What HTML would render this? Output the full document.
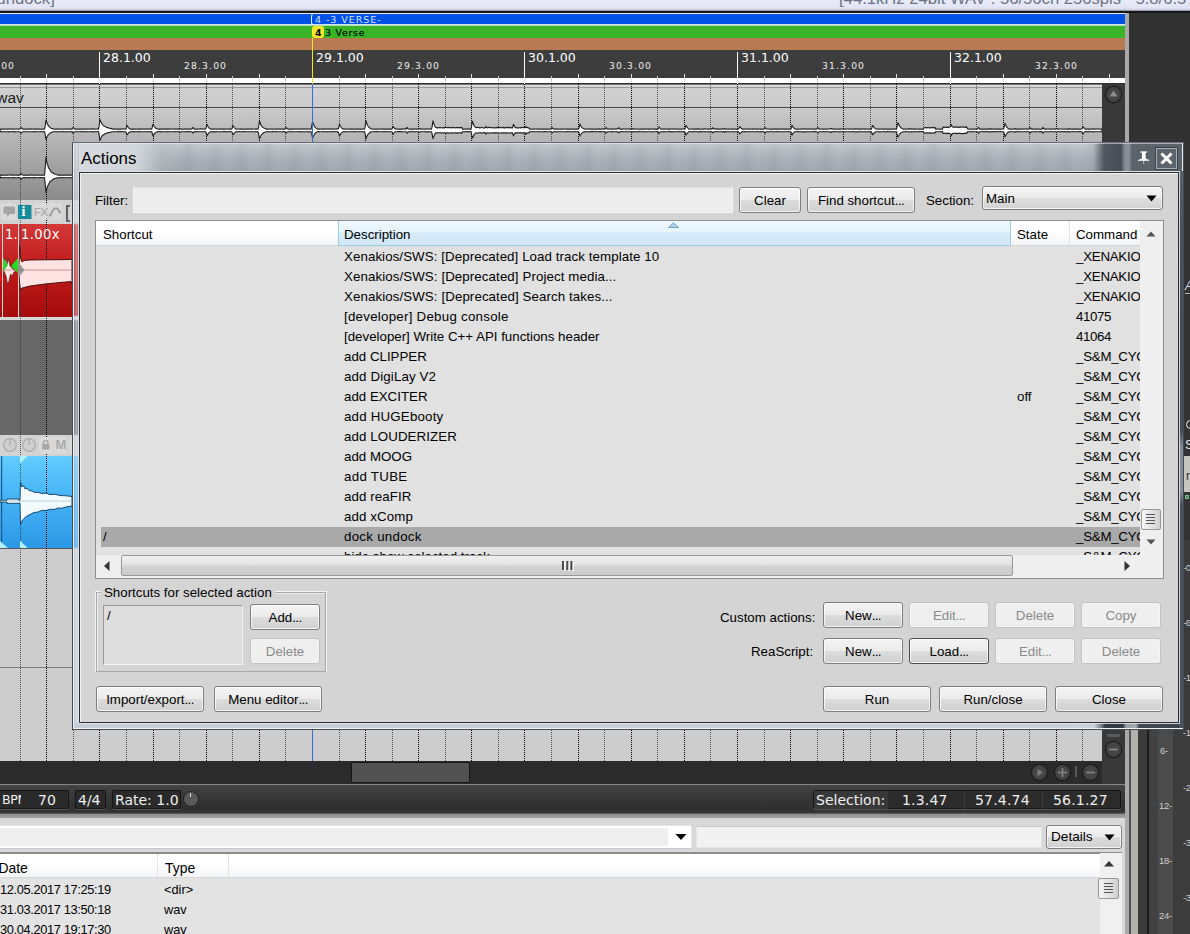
<!DOCTYPE html>
<html><head><meta charset="utf-8"><title>Actions</title>
<style>
*{box-sizing:border-box;margin:0;padding:0}
html,body{width:1190px;height:934px;overflow:hidden;background:#333}
body{position:relative;font-family:"Liberation Sans",sans-serif;font-size:13.3px;color:#000;line-height:1}
.abs{position:absolute}
.dv{font-family:"DejaVu Sans","Liberation Sans",sans-serif}
/* ---- top ---- */
#titlestrip{left:0;top:0;width:1190px;height:10px;background:linear-gradient(#e9ebf8,#e2e4f4 80%,#c9cde0);overflow:hidden}
#titlestrip span{position:absolute;font-size:16.65px;color:#6c7486;white-space:nowrap}
#arr{left:0;top:10px;width:1125px;height:804px;background:#ccc;overflow:hidden}

.cb{position:absolute;width:15px;height:15px;border-radius:50%;background:radial-gradient(#4c4c4c,#424242 60%,#383838);box-shadow:0 0 0 1.2px #1c1c1c}
.cb svg{position:absolute;left:-1px;top:-1px}
.tbox{position:absolute;height:19.5px;background:#2a2a2a;border:1px solid #161616;border-radius:2px;box-shadow:0 1px 0 #555}
.tt{font-size:14px;color:#f0f0f0;white-space:nowrap;line-height:16px}
.me{font-size:12.8px;color:#000;white-space:nowrap;line-height:14px}
.ml{font-size:9.5px;color:#d0d0d0;font-family:"Liberation Sans",sans-serif;white-space:nowrap;letter-spacing:-.3px}
/* ---- dialog ---- */
#win{background:#eef1f4;border:1px solid #474b50;border-top-color:#6a7078}
#wtitle{background:
linear-gradient(90deg,rgba(0,0,0,0) 1019px,rgba(70,76,84,.9) 1030px,rgba(66,72,80,.95) 1047px,rgba(130,138,146,.9) 1051px,rgba(130,138,146,.9) 1055px,rgba(84,92,100,.92) 1058px,rgba(84,92,100,.92) 100%),
linear-gradient(90deg,rgba(214,218,222,1) 0,rgba(212,216,220,.95) 62px,rgba(200,205,210,.5) 80px,rgba(190,196,202,0) 100px),
repeating-linear-gradient(90deg,rgba(0,0,0,0) 0,rgba(0,0,0,.03) 8px,rgba(255,255,255,.03) 18px,rgba(0,0,0,0) 26.6px),
linear-gradient(180deg,#c2c8ce,#adb4bb 45%,#9ea6ae)}
.d{letter-spacing:-.6px}
.lbl{font-size:13.3px;line-height:15px;white-space:nowrap;color:#000}
.row.sel{background:linear-gradient(90deg,transparent 5px,#a9a9a9 5px)}
.row.sel span:first-child{}

.btn{position:absolute;height:26px;border:1px solid #7e7e7e;border-radius:3px;background:linear-gradient(#f4f4f4,#ebebeb 48%,#dcdcdc 52%,#d0d0d0);box-shadow:inset 0 0 0 1px rgba(255,255,255,.75);text-align:center;line-height:25px;font-size:13.3px;color:#000;white-space:nowrap}
.btn.dis{color:#8a8a8a;border-color:#c2c2c2;background:#efefef;box-shadow:inset 0 0 0 1px rgba(255,255,255,.35)}
.row{position:absolute;left:0;height:20px;width:1044px;line-height:20px;white-space:nowrap}
.row span{position:absolute;top:0}
</style></head><body>

<!-- title strip -->
<div id="titlestrip" class="abs">
<span style="left:-3.500px;top:-9.500px">undock]</span>
<span style="left:839px;top:-9px">[44.1kHz 24bit WAV : 56/56ch 256spls ~5.8/6.5%]</span>
</div>
<div class="abs" style="left:0;top:10px;width:1190px;height:1px;background:#9a9ca8"></div>
<div class="abs" style="left:0;top:11px;width:1190px;height:2px;background:#161616"></div>

<!-- arrange -->
<div class="abs" style="left:0;top:13px;width:1125px;height:1px;background:#e8eef8"></div>
<div class="abs" style="left:0;top:14px;width:1125px;height:10px;background:#0052e6"></div>
<div class="abs" style="left:0;top:24px;width:1125px;height:2px;background:linear-gradient(#dfe9ff,#9fd8a0)"></div>
<div class="abs" style="left:0;top:26px;width:1125px;height:12px;background:#38b426"></div>
<div class="abs" style="left:0;top:38px;width:1125px;height:12px;background:#b87a52"></div>
<div class="abs" style="left:0;top:50px;width:1125px;height:28px;background:#3d3d3d"></div>
<div class="abs" style="left:0;top:78px;width:1125px;height:5px;background:#fff"></div>
<div class="abs" style="left:0;top:83px;width:1125px;height:2px;background:linear-gradient(#2e2e2e 50%,#777 50%)"></div>
<div class="abs" style="left:20px;top:76px;width:1px;height:6px;background:#ccc"></div><div class="abs" style="left:46px;top:74px;width:1px;height:8px;background:#ddd"></div><div class="abs" style="left:73px;top:76px;width:1px;height:6px;background:#ccc"></div><div class="abs" style="left:99px;top:52px;width:1px;height:32px;background:#fff"></div><div class="abs" style="left:126px;top:76px;width:1px;height:6px;background:#ccc"></div><div class="abs" style="left:153px;top:74px;width:1px;height:8px;background:#ddd"></div><div class="abs" style="left:179px;top:76px;width:1px;height:6px;background:#ccc"></div><div class="abs" style="left:206px;top:74px;width:1px;height:8px;background:#ddd"></div><div class="abs" style="left:232px;top:76px;width:1px;height:6px;background:#ccc"></div><div class="abs" style="left:259px;top:74px;width:1px;height:8px;background:#ddd"></div><div class="abs" style="left:285px;top:76px;width:1px;height:6px;background:#ccc"></div><div class="abs" style="left:312px;top:52px;width:1px;height:32px;background:#fff"></div><div class="abs" style="left:339px;top:76px;width:1px;height:6px;background:#ccc"></div><div class="abs" style="left:365px;top:74px;width:1px;height:8px;background:#ddd"></div><div class="abs" style="left:392px;top:76px;width:1px;height:6px;background:#ccc"></div><div class="abs" style="left:418px;top:74px;width:1px;height:8px;background:#ddd"></div><div class="abs" style="left:445px;top:76px;width:1px;height:6px;background:#ccc"></div><div class="abs" style="left:471px;top:74px;width:1px;height:8px;background:#ddd"></div><div class="abs" style="left:498px;top:76px;width:1px;height:6px;background:#ccc"></div><div class="abs" style="left:524px;top:52px;width:1px;height:32px;background:#fff"></div><div class="abs" style="left:551px;top:76px;width:1px;height:6px;background:#ccc"></div><div class="abs" style="left:578px;top:74px;width:1px;height:8px;background:#ddd"></div><div class="abs" style="left:604px;top:76px;width:1px;height:6px;background:#ccc"></div><div class="abs" style="left:631px;top:74px;width:1px;height:8px;background:#ddd"></div><div class="abs" style="left:657px;top:76px;width:1px;height:6px;background:#ccc"></div><div class="abs" style="left:684px;top:74px;width:1px;height:8px;background:#ddd"></div><div class="abs" style="left:710px;top:76px;width:1px;height:6px;background:#ccc"></div><div class="abs" style="left:737px;top:52px;width:1px;height:32px;background:#fff"></div><div class="abs" style="left:764px;top:76px;width:1px;height:6px;background:#ccc"></div><div class="abs" style="left:790px;top:74px;width:1px;height:8px;background:#ddd"></div><div class="abs" style="left:817px;top:76px;width:1px;height:6px;background:#ccc"></div><div class="abs" style="left:843px;top:74px;width:1px;height:8px;background:#ddd"></div><div class="abs" style="left:870px;top:76px;width:1px;height:6px;background:#ccc"></div><div class="abs" style="left:896px;top:74px;width:1px;height:8px;background:#ddd"></div><div class="abs" style="left:923px;top:76px;width:1px;height:6px;background:#ccc"></div><div class="abs" style="left:950px;top:52px;width:1px;height:32px;background:#fff"></div><div class="abs" style="left:976px;top:76px;width:1px;height:6px;background:#ccc"></div><div class="abs" style="left:1003px;top:74px;width:1px;height:8px;background:#ddd"></div><div class="abs" style="left:1029px;top:76px;width:1px;height:6px;background:#ccc"></div><div class="abs" style="left:1056px;top:74px;width:1px;height:8px;background:#ddd"></div><div class="abs" style="left:1082px;top:76px;width:1px;height:6px;background:#ccc"></div><div class="abs" style="left:1109px;top:74px;width:1px;height:8px;background:#ddd"></div>
<!-- ruler labels -->
<div class="abs dv" style="left:0;top:50px;width:1125px;height:28px;color:#fff;overflow:hidden">
<span class="abs" style="left:-28px;top:10.5px;font-size:9.2px;letter-spacing:1.15px;color:#eee">27.3.00</span>
<span class="abs" style="left:103px;top:2px;font-size:12.5px">28.1.00</span>
<span class="abs" style="left:184px;top:10.5px;font-size:9.2px;letter-spacing:1.15px;color:#eee">28.3.00</span>
<span class="abs" style="left:316px;top:2px;font-size:12.5px">29.1.00</span>
<span class="abs" style="left:397px;top:10.5px;font-size:9.2px;letter-spacing:1.15px;color:#eee">29.3.00</span>
<span class="abs" style="left:528px;top:2px;font-size:12.5px">30.1.00</span>
<span class="abs" style="left:609px;top:10.5px;font-size:9.2px;letter-spacing:1.15px;color:#eee">30.3.00</span>
<span class="abs" style="left:741px;top:2px;font-size:12.5px">31.1.00</span>
<span class="abs" style="left:822px;top:10.5px;font-size:9.2px;letter-spacing:1.15px;color:#eee">31.3.00</span>
<span class="abs" style="left:954px;top:2px;font-size:12.5px">32.1.00</span>
<span class="abs" style="left:1035px;top:10.5px;font-size:9.2px;letter-spacing:1.15px;color:#eee">32.3.00</span>
</div>

<!-- track lanes -->
<div class="abs" style="left:0;top:85px;width:1102px;height:676px;background:#cdcdcd"></div>
<!-- item 1 (grey) -->
<div class="abs" style="left:0;top:85px;width:1102px;height:116px;background:linear-gradient(#d2d2d2,#cacaca 20%,#8a8a8a)"></div>
<div class="abs" style="left:0;top:85px;width:1102px;height:2px;background:#d8d8d8"></div><div class="abs" style="left:0;top:87px;width:1102px;height:1px;background:#9a9a9a"></div>
<div class="abs" style="left:0;top:107px;width:1102px;height:1px;background:#4a4a4a"></div>
<span class="abs" style="left:-8px;top:90px;font-size:15.5px;color:#222">.wav</span>
<!-- track 2 header strip -->
<div class="abs" style="left:0;top:200px;width:1102px;height:24px;background:#d2d2d2"></div>
<!-- item 2 (red) -->
<div class="abs" style="left:0;top:224px;width:1102px;height:93px;background:linear-gradient(#d43838,#c01c1c 45%,#a60c0c)"></div>
<div class="abs" style="left:0;top:317px;width:1102px;height:3px;background:#d8d8d8"></div>
<div class="abs" style="left:0;top:320px;width:1102px;height:115px;background:#676767"></div>
<div class="abs" style="left:0;top:435px;width:1102px;height:21px;background:#d2d2d2"></div>
<!-- item 3 (blue) -->
<div class="abs" style="left:0;top:456px;width:1102px;height:93px;background:linear-gradient(#62ccff,#42b0f4 50%,#2c98e6)"></div>
<div class="abs" style="left:0;top:548px;width:1102px;height:1px;background:#555"></div>
<div class="abs" style="left:0;top:667px;width:1102px;height:1px;background:#7a7a7a"></div>

<svg class="abs" style="left:0;top:0" width="1125" height="934" viewBox="0 0 1125 934" shape-rendering="crispEdges">
<line x1="20.5" y1="84" x2="20.5" y2="761" stroke="#333" stroke-opacity="0.8" stroke-dasharray="1 1"/><line x1="46.5" y1="84" x2="46.5" y2="761" stroke="#000" stroke-opacity="1" stroke-dasharray="1 1"/><line x1="73.5" y1="84" x2="73.5" y2="761" stroke="#333" stroke-opacity="0.8" stroke-dasharray="1 1"/><line x1="99.5" y1="84" x2="99.5" y2="761" stroke="#000" stroke-opacity="1" stroke-dasharray="1 1"/><line x1="126.5" y1="84" x2="126.5" y2="761" stroke="#333" stroke-opacity="0.8" stroke-dasharray="1 1"/><line x1="153.5" y1="84" x2="153.5" y2="761" stroke="#000" stroke-opacity="1" stroke-dasharray="1 1"/><line x1="179.5" y1="84" x2="179.5" y2="761" stroke="#333" stroke-opacity="0.8" stroke-dasharray="1 1"/><line x1="206.5" y1="84" x2="206.5" y2="761" stroke="#000" stroke-opacity="1" stroke-dasharray="1 1"/><line x1="232.5" y1="84" x2="232.5" y2="761" stroke="#333" stroke-opacity="0.8" stroke-dasharray="1 1"/><line x1="259.5" y1="84" x2="259.5" y2="761" stroke="#000" stroke-opacity="1" stroke-dasharray="1 1"/><line x1="285.5" y1="84" x2="285.5" y2="761" stroke="#333" stroke-opacity="0.8" stroke-dasharray="1 1"/><line x1="312.5" y1="84" x2="312.5" y2="761" stroke="#000" stroke-opacity="1" stroke-dasharray="1 1"/><line x1="339.5" y1="84" x2="339.5" y2="761" stroke="#333" stroke-opacity="0.8" stroke-dasharray="1 1"/><line x1="365.5" y1="84" x2="365.5" y2="761" stroke="#000" stroke-opacity="1" stroke-dasharray="1 1"/><line x1="392.5" y1="84" x2="392.5" y2="761" stroke="#333" stroke-opacity="0.8" stroke-dasharray="1 1"/><line x1="418.5" y1="84" x2="418.5" y2="761" stroke="#000" stroke-opacity="1" stroke-dasharray="1 1"/><line x1="445.5" y1="84" x2="445.5" y2="761" stroke="#333" stroke-opacity="0.8" stroke-dasharray="1 1"/><line x1="471.5" y1="84" x2="471.5" y2="761" stroke="#000" stroke-opacity="1" stroke-dasharray="1 1"/><line x1="498.5" y1="84" x2="498.5" y2="761" stroke="#333" stroke-opacity="0.8" stroke-dasharray="1 1"/><line x1="524.5" y1="84" x2="524.5" y2="761" stroke="#000" stroke-opacity="1" stroke-dasharray="1 1"/><line x1="551.5" y1="84" x2="551.5" y2="761" stroke="#333" stroke-opacity="0.8" stroke-dasharray="1 1"/><line x1="578.5" y1="84" x2="578.5" y2="761" stroke="#000" stroke-opacity="1" stroke-dasharray="1 1"/><line x1="604.5" y1="84" x2="604.5" y2="761" stroke="#333" stroke-opacity="0.8" stroke-dasharray="1 1"/><line x1="631.5" y1="84" x2="631.5" y2="761" stroke="#000" stroke-opacity="1" stroke-dasharray="1 1"/><line x1="657.5" y1="84" x2="657.5" y2="761" stroke="#333" stroke-opacity="0.8" stroke-dasharray="1 1"/><line x1="684.5" y1="84" x2="684.5" y2="761" stroke="#000" stroke-opacity="1" stroke-dasharray="1 1"/><line x1="710.5" y1="84" x2="710.5" y2="761" stroke="#333" stroke-opacity="0.8" stroke-dasharray="1 1"/><line x1="737.5" y1="84" x2="737.5" y2="761" stroke="#000" stroke-opacity="1" stroke-dasharray="1 1"/><line x1="764.5" y1="84" x2="764.5" y2="761" stroke="#333" stroke-opacity="0.8" stroke-dasharray="1 1"/><line x1="790.5" y1="84" x2="790.5" y2="761" stroke="#000" stroke-opacity="1" stroke-dasharray="1 1"/><line x1="817.5" y1="84" x2="817.5" y2="761" stroke="#333" stroke-opacity="0.8" stroke-dasharray="1 1"/><line x1="843.5" y1="84" x2="843.5" y2="761" stroke="#000" stroke-opacity="1" stroke-dasharray="1 1"/><line x1="870.5" y1="84" x2="870.5" y2="761" stroke="#333" stroke-opacity="0.8" stroke-dasharray="1 1"/><line x1="896.5" y1="84" x2="896.5" y2="761" stroke="#000" stroke-opacity="1" stroke-dasharray="1 1"/><line x1="923.5" y1="84" x2="923.5" y2="761" stroke="#333" stroke-opacity="0.8" stroke-dasharray="1 1"/><line x1="950.5" y1="84" x2="950.5" y2="761" stroke="#000" stroke-opacity="1" stroke-dasharray="1 1"/><line x1="976.5" y1="84" x2="976.5" y2="761" stroke="#333" stroke-opacity="0.8" stroke-dasharray="1 1"/><line x1="1003.5" y1="84" x2="1003.5" y2="761" stroke="#000" stroke-opacity="1" stroke-dasharray="1 1"/><line x1="1029.5" y1="84" x2="1029.5" y2="761" stroke="#333" stroke-opacity="0.8" stroke-dasharray="1 1"/><line x1="1056.5" y1="84" x2="1056.5" y2="761" stroke="#000" stroke-opacity="1" stroke-dasharray="1 1"/><line x1="1082.5" y1="84" x2="1082.5" y2="761" stroke="#333" stroke-opacity="0.8" stroke-dasharray="1 1"/>
</svg>
<svg class="abs" style="left:0;top:0" width="1125" height="934" viewBox="0 0 1125 934">
<path d="M0.0 129.1L0.5 129.0L1.0 129.1L1.5 129.1L2.0 129.0L2.5 129.1L3.0 129.0L3.5 129.1L4.0 129.2L4.5 129.0L5.0 128.9L5.5 129.0L6.0 129.0L6.5 129.1L7.0 129.1L7.5 129.1L8.0 129.0L8.5 128.9L9.0 129.1L9.5 128.9L10.0 129.0L10.5 129.1L11.0 128.9L11.5 129.0L12.0 129.1L12.5 129.2L13.0 129.0L13.5 128.9L14.0 129.2L14.5 129.2L15.0 129.1L15.5 129.0L16.0 129.0L16.5 129.0L17.0 129.0L17.5 129.1L18.0 129.2L18.5 129.0L19.0 129.1L19.5 129.0L20.0 129.0L20.5 128.4L21.0 127.5L21.5 128.0L22.0 128.5L22.5 128.9L23.0 129.1L23.5 129.2L24.0 129.1L24.5 129.2L25.0 129.1L25.5 129.1L26.0 129.0L26.5 129.0L27.0 129.2L27.5 129.1L28.0 129.2L28.5 129.0L29.0 129.2L29.5 129.1L30.0 129.1L30.5 129.2L31.0 128.9L31.5 128.9L32.0 128.9L32.5 129.1L33.0 129.2L33.5 129.1L34.0 128.9L34.5 128.9L35.0 129.2L35.5 129.1L36.0 129.0L36.5 129.1L37.0 129.0L37.5 129.1L38.0 129.1L38.5 128.9L39.0 129.0L39.5 129.1L40.0 129.1L40.5 129.2L41.0 129.2L41.5 129.0L42.0 129.1L42.5 129.0L43.0 129.2L43.5 129.0L44.0 129.2L44.5 129.0L45.0 127.0L45.5 123.5L46.0 119.8L46.5 121.7L47.0 123.1L47.5 123.9L48.0 124.9L48.5 126.0L49.0 126.3L49.5 126.9L50.0 127.4L50.5 127.7L51.0 128.2L51.5 128.5L52.0 128.5L52.5 128.7L53.0 129.0L53.5 129.0L54.0 128.9L54.5 129.1L55.0 129.2L55.5 129.0L56.0 129.1L56.5 129.1L57.0 128.9L57.5 129.1L58.0 129.0L58.5 129.0L59.0 129.1L59.5 129.1L60.0 129.2L60.5 129.1L61.0 128.9L61.5 129.0L62.0 129.1L62.5 129.2L63.0 129.2L63.5 129.0L64.0 129.0L64.5 128.9L65.0 129.0L65.5 129.1L66.0 129.1L66.5 129.0L67.0 129.0L67.5 129.2L68.0 128.9L68.5 129.0L69.0 129.1L69.5 129.0L70.0 129.0L70.5 129.1L71.0 129.1L71.5 129.1L72.0 129.1L72.5 128.3L73.0 127.4L73.5 128.0L74.0 128.4L74.5 128.8L75.0 129.1L75.5 129.1L76.0 129.1L76.5 129.1L77.0 129.1L77.5 129.2L78.0 129.0L78.5 129.1L79.0 129.1L79.5 129.0L80.0 129.1L80.5 129.2L81.0 129.0L81.5 129.1L82.0 129.0L82.5 129.2L83.0 129.0L83.5 129.1L84.0 128.9L84.5 129.2L85.0 129.0L85.5 129.1L86.0 128.9L86.5 129.1L87.0 129.0L87.5 129.1L88.0 129.0L88.5 129.0L89.0 129.1L89.5 129.1L90.0 129.0L90.5 128.9L91.0 129.0L91.5 129.1L92.0 129.0L92.5 128.9L93.0 128.9L93.5 129.0L94.0 128.9L94.5 129.0L95.0 129.2L95.5 129.2L96.0 129.0L96.5 129.0L97.0 129.0L97.5 128.9L98.0 129.1L98.5 129.2L99.0 126.8L99.5 123.0L100.0 119.3L100.5 120.9L101.0 122.2L101.5 122.7L102.0 123.8L102.5 124.6L103.0 125.1L103.5 125.6L104.0 126.0L104.5 126.0L105.0 126.6L105.5 126.9L106.0 126.9L106.5 127.4L107.0 127.6L107.5 127.6L108.0 127.8L108.5 127.9L109.0 128.1L109.5 128.3L110.0 128.4L110.5 128.4L111.0 128.6L111.5 128.6L112.0 128.9L112.5 128.9L113.0 129.0L113.5 129.1L114.0 129.1L114.5 129.0L115.0 129.1L115.5 128.9L116.0 128.9L116.5 129.1L117.0 129.0L117.5 129.2L118.0 129.2L118.5 129.0L119.0 129.1L119.5 129.1L120.0 129.0L120.5 129.2L121.0 129.0L121.5 129.0L122.0 129.2L122.5 129.0L123.0 128.9L123.5 129.0L124.0 129.0L124.5 129.1L125.0 129.1L125.5 129.1L126.0 128.8L126.5 127.1L127.0 125.3L127.5 126.4L128.0 127.0L128.5 127.7L129.0 128.3L129.5 128.6L130.0 129.0L130.5 129.0L131.0 129.2L131.5 129.1L132.0 129.1L132.5 129.1L133.0 129.0L133.5 129.1L134.0 129.1L134.5 128.9L135.0 129.1L135.5 129.1L136.0 129.0L136.5 129.0L137.0 129.1L137.5 129.2L138.0 129.1L138.5 129.1L139.0 128.9L139.5 129.2L140.0 129.1L140.5 129.1L141.0 129.1L141.5 129.2L142.0 129.0L142.5 129.0L143.0 128.9L143.5 129.0L144.0 129.2L144.5 128.9L145.0 129.0L145.5 129.0L146.0 129.2L146.5 128.9L147.0 129.1L147.5 129.0L148.0 129.1L148.5 128.9L149.0 129.1L149.5 129.0L150.0 128.9L150.5 129.0L151.0 128.9L151.5 129.1L152.0 128.3L152.5 126.1L153.0 124.3L153.5 125.4L154.0 126.3L154.5 126.9L155.0 127.4L155.5 128.0L156.0 128.4L156.5 128.6L157.0 128.8L157.5 129.0L158.0 129.0L158.5 129.1L159.0 129.1L159.5 129.1L160.0 129.1L160.5 129.0L161.0 129.2L161.5 129.0L162.0 128.9L162.5 129.1L163.0 129.0L163.5 129.2L164.0 129.0L164.5 129.1L165.0 129.0L165.5 128.9L166.0 128.9L166.5 129.2L167.0 128.9L167.5 129.2L168.0 128.9L168.5 129.0L169.0 129.1L169.5 129.1L170.0 129.1L170.5 129.0L171.0 128.9L171.5 129.0L172.0 129.0L172.5 129.0L173.0 129.1L173.5 128.9L174.0 129.1L174.5 129.0L175.0 129.1L175.5 128.9L176.0 129.0L176.5 128.9L177.0 129.1L177.5 129.1L178.0 129.1L178.5 129.1L179.0 129.2L179.5 129.1L180.0 128.4L180.5 128.7L181.0 129.1L181.5 129.1L182.0 129.2L182.5 129.1L183.0 129.2L183.5 129.2L184.0 129.1L184.5 129.0L185.0 128.9L185.5 129.0L186.0 129.2L186.5 129.0L187.0 129.1L187.5 129.0L188.0 129.1L188.5 128.9L189.0 129.2L189.5 129.0L190.0 128.9L190.5 129.2L191.0 129.1L191.5 129.1L192.0 128.9L192.5 128.4L193.0 127.2L193.5 128.0L194.0 128.7L194.5 129.1L195.0 129.0L195.5 129.2L196.0 129.2L196.5 129.0L197.0 129.1L197.5 129.1L198.0 129.0L198.5 129.0L199.0 129.0L199.5 129.1L200.0 129.0L200.5 128.9L201.0 128.9L201.5 128.9L202.0 129.0L202.5 129.1L203.0 129.0L203.5 129.0L204.0 129.0L204.5 129.1L205.0 129.1L205.5 129.0L206.0 128.4L206.5 126.2L207.0 124.2L207.5 125.4L208.0 126.4L208.5 127.3L209.0 127.8L209.5 128.4L210.0 128.7L210.5 129.0L211.0 129.0L211.5 129.2L212.0 129.0L212.5 129.1L213.0 129.0L213.5 129.1L214.0 128.9L214.5 129.0L215.0 129.0L215.5 129.0L216.0 129.1L216.5 129.1L217.0 129.0L217.5 129.0L218.0 129.0L218.5 129.2L219.0 129.1L219.5 128.9L220.0 129.2L220.5 128.9L221.0 129.1L221.5 129.0L222.0 129.0L222.5 129.2L223.0 129.0L223.5 129.1L224.0 129.0L224.5 129.1L225.0 129.1L225.5 129.2L226.0 129.0L226.5 129.0L227.0 129.0L227.5 129.0L228.0 129.1L228.5 129.1L229.0 129.1L229.5 129.2L230.0 129.1L230.5 129.0L231.0 129.1L231.5 129.1L232.0 128.7L232.5 127.0L233.0 125.4L233.5 126.4L234.0 127.2L234.5 127.9L235.0 128.2L235.5 128.7L236.0 129.0L236.5 129.2L237.0 129.1L237.5 129.0L238.0 129.0L238.5 129.0L239.0 129.0L239.5 129.2L240.0 129.0L240.5 129.1L241.0 129.1L241.5 129.0L242.0 129.1L242.5 128.9L243.0 129.2L243.5 129.1L244.0 129.2L244.5 129.1L245.0 128.9L245.5 129.1L246.0 129.0L246.5 129.2L247.0 129.1L247.5 129.1L248.0 129.1L248.5 129.1L249.0 129.0L249.5 129.1L250.0 128.9L250.5 128.9L251.0 129.0L251.5 128.9L252.0 129.2L252.5 129.1L253.0 129.0L253.5 129.0L254.0 129.0L254.5 129.0L255.0 129.0L255.5 129.1L256.0 129.0L256.5 129.1L257.0 128.9L257.5 129.2L258.0 129.1L258.5 127.3L259.0 124.5L259.5 121.2L260.0 122.3L260.5 124.1L261.0 124.9L261.5 125.7L262.0 126.5L262.5 127.0L263.0 127.4L263.5 127.7L264.0 128.0L264.5 128.3L265.0 128.5L265.5 128.8L266.0 129.0L266.5 129.1L267.0 129.1L267.5 129.0L268.0 129.1L268.5 129.0L269.0 129.0L269.5 128.9L270.0 129.1L270.5 129.0L271.0 128.9L271.5 129.1L272.0 129.2L272.5 129.1L273.0 129.1L273.5 129.0L274.0 129.0L274.5 129.0L275.0 129.1L275.5 129.1L276.0 129.0L276.5 129.1L277.0 128.9L277.5 129.2L278.0 129.1L278.5 129.0L279.0 128.9L279.5 129.1L280.0 129.0L280.5 129.1L281.0 129.1L281.5 128.9L282.0 129.0L282.5 129.1L283.0 129.0L283.5 129.1L284.0 129.1L284.5 129.2L285.0 129.0L285.5 128.5L286.0 127.3L286.5 127.9L287.0 128.5L287.5 128.8L288.0 129.1L288.5 129.0L289.0 129.2L289.5 129.1L290.0 129.2L290.5 129.1L291.0 129.1L291.5 129.1L292.0 129.0L292.5 129.1L293.0 129.1L293.5 129.1L294.0 128.9L294.5 129.0L295.0 129.2L295.5 129.0L296.0 129.0L296.5 129.0L297.0 129.1L297.5 129.0L298.0 128.9L298.5 129.0L299.0 129.1L299.5 129.1L300.0 129.0L300.5 129.0L301.0 128.9L301.5 129.0L302.0 128.9L302.5 129.1L303.0 129.1L303.5 129.0L304.0 128.9L304.5 129.0L305.0 129.1L305.5 128.9L306.0 129.1L306.5 129.1L307.0 129.1L307.5 129.0L308.0 129.0L308.5 128.9L309.0 129.0L309.5 129.0L310.0 129.1L310.5 129.1L311.0 129.0L311.5 128.1L312.0 124.7L312.5 122.1L313.0 122.9L313.5 124.0L314.0 125.4L314.5 126.4L315.0 127.1L315.5 127.7L316.0 128.2L316.5 128.6L317.0 128.9L317.5 129.0L318.0 129.1L318.5 129.1L319.0 128.9L319.5 129.0L320.0 129.1L320.5 129.0L321.0 129.0L321.5 129.2L322.0 129.1L322.5 129.0L323.0 129.1L323.5 129.0L324.0 129.1L324.5 129.1L325.0 128.9L325.5 128.9L326.0 129.1L326.5 129.1L327.0 128.9L327.5 129.0L328.0 129.0L328.5 128.9L329.0 129.1L329.5 129.1L330.0 129.1L330.5 129.0L331.0 128.9L331.5 129.0L332.0 129.1L332.5 129.1L333.0 129.2L333.5 129.1L334.0 129.0L334.5 129.0L335.0 129.1L335.5 129.0L336.0 129.0L336.5 129.1L337.0 128.9L337.5 128.9L338.0 129.0L338.5 128.4L339.0 126.2L339.5 124.0L340.0 125.4L340.5 126.5L341.0 127.1L341.5 127.8L342.0 128.3L342.5 128.7L343.0 128.9L343.5 128.9L344.0 129.1L344.5 128.9L345.0 129.2L345.5 129.0L346.0 129.0L346.5 129.0L347.0 129.2L347.5 129.0L348.0 128.9L348.5 129.1L349.0 129.2L349.5 129.2L350.0 129.1L350.5 129.0L351.0 129.1L351.5 129.0L352.0 129.1L352.5 129.2L353.0 129.1L353.5 129.2L354.0 129.0L354.5 129.0L355.0 129.1L355.5 129.2L356.0 129.1L356.5 129.1L357.0 129.1L357.5 129.2L358.0 129.1L358.5 129.1L359.0 129.0L359.5 129.2L360.0 129.1L360.5 129.1L361.0 129.1L361.5 129.1L362.0 129.2L362.5 129.0L363.0 129.0L363.5 128.9L364.0 129.1L364.5 129.1L365.0 127.4L365.5 124.3L366.0 120.6L366.5 122.5L367.0 124.0L367.5 125.2L368.0 126.0L368.5 126.7L369.0 127.4L369.5 127.8L370.0 128.0L370.5 128.5L371.0 128.8L371.5 129.0L372.0 129.0L372.5 129.0L373.0 129.0L373.5 129.2L374.0 129.1L374.5 129.2L375.0 129.2L375.5 129.0L376.0 129.1L376.5 129.2L377.0 129.1L377.5 129.1L378.0 129.2L378.5 129.1L379.0 129.0L379.5 129.0L380.0 129.1L380.5 129.2L381.0 129.0L381.5 129.0L382.0 129.0L382.5 128.9L383.0 129.2L383.5 129.1L384.0 129.1L384.5 129.1L385.0 129.2L385.5 129.0L386.0 129.1L386.5 129.2L387.0 129.2L387.5 129.0L388.0 129.1L388.5 129.1L389.0 129.1L389.5 129.0L390.0 129.1L390.5 129.1L391.0 129.0L391.5 129.1L392.0 129.0L392.5 127.8L393.0 126.2L393.5 127.1L394.0 127.7L394.5 128.3L395.0 128.7L395.5 128.9L396.0 129.0L396.5 129.1L397.0 129.2L397.5 129.0L398.0 129.0L398.5 129.0L399.0 129.1L399.5 129.1L400.0 129.1L400.5 129.0L401.0 129.1L401.5 129.0L402.0 129.1L402.5 129.1L403.0 129.0L403.5 129.0L404.0 128.9L404.5 128.9L405.0 129.0L405.5 129.1L406.0 129.0L406.5 128.5L407.0 127.3L407.5 128.2L408.0 128.6L408.5 128.9L409.0 129.0L409.5 129.2L410.0 129.1L410.5 129.2L411.0 129.0L411.5 129.2L412.0 129.0L412.5 129.1L413.0 129.0L413.5 129.1L414.0 129.0L414.5 129.1L415.0 129.0L415.5 129.0L416.0 128.9L416.5 129.1L417.0 129.0L417.5 129.1L418.0 129.1L418.5 129.0L419.0 128.9L419.5 128.6L420.0 128.7L420.5 129.2L421.0 129.1L421.5 129.1L422.0 129.1L422.5 129.0L423.0 129.0L423.5 129.1L424.0 129.0L424.5 129.2L425.0 129.0L425.5 129.0L426.0 129.2L426.5 128.9L427.0 129.0L427.5 129.0L428.0 128.9L428.5 129.1L429.0 128.9L429.5 129.1L430.0 128.9L430.5 129.0L431.0 129.2L431.5 129.1L432.0 127.5L432.5 124.1L433.0 120.7L433.5 122.6L434.0 124.2L434.5 125.7L435.0 126.4L435.5 127.2L436.0 127.7L436.5 127.7L437.0 127.6L437.5 128.0L438.0 127.8L438.5 127.8L439.0 127.6L439.5 127.8L440.0 127.9L440.5 127.6L441.0 127.8L441.5 127.7L442.0 127.9L442.5 128.0L443.0 127.8L443.5 127.4L444.0 127.9L444.5 128.1L445.0 127.5L445.5 127.5L446.0 127.5L446.5 127.5L447.0 127.8L447.5 127.6L448.0 127.7L448.5 127.6L449.0 127.8L449.5 127.5L450.0 127.7L450.5 127.7L451.0 127.4L451.5 127.8L452.0 127.9L452.5 127.8L453.0 127.3L453.5 127.5L454.0 127.5L454.5 127.9L455.0 127.9L455.5 127.7L456.0 127.7L456.5 127.5L457.0 127.6L457.5 127.8L458.0 127.9L458.5 127.5L459.0 127.6L459.5 127.9L460.0 127.8L460.5 127.6L461.0 127.5L461.5 127.9L462.0 127.4L462.5 129.1L463.0 129.1L463.5 129.1L464.0 129.0L464.5 129.0L465.0 129.2L465.5 129.0L466.0 129.0L466.5 129.1L467.0 129.1L467.5 129.1L468.0 129.1L468.5 128.9L469.0 129.0L469.5 129.1L470.0 129.1L470.5 129.0L471.0 129.1L471.5 126.8L472.0 123.4L472.5 121.3L473.0 123.0L473.5 124.1L474.0 125.5L474.5 126.2L475.0 126.9L475.5 127.2L476.0 127.7L476.5 127.6L477.0 127.5L477.5 127.4L478.0 127.6L478.5 127.3L479.0 127.8L479.5 128.0L480.0 127.6L480.5 127.9L481.0 127.7L481.5 127.4L482.0 127.6L482.5 127.8L483.0 127.8L483.5 127.9L484.0 128.1L484.5 127.9L485.0 127.6L485.5 127.8L486.0 126.2L486.5 127.2L487.0 127.6L487.5 128.0L488.0 127.8L488.5 127.3L489.0 127.4L489.5 127.5L490.0 127.8L490.5 127.7L491.0 127.6L491.5 127.6L492.0 127.7L492.5 127.8L493.0 128.0L493.5 127.7L494.0 127.6L494.5 127.9L495.0 127.6L495.5 128.0L496.0 127.7L496.5 127.9L497.0 127.4L497.5 127.4L498.0 127.9L498.5 127.7L499.0 127.3L499.5 127.7L500.0 127.4L500.5 127.6L501.0 127.7L501.5 127.7L502.0 127.8L502.5 127.4L503.0 127.8L503.5 127.4L504.0 128.0L504.5 127.9L505.0 127.7L505.5 127.9L506.0 127.4L506.5 127.4L507.0 127.7L507.5 127.4L508.0 127.7L508.5 127.9L509.0 127.4L509.5 127.3L510.0 127.7L510.5 127.9L511.0 127.7L511.5 127.5L512.0 127.9L512.5 127.9L513.0 125.8L513.5 124.3L514.0 125.6L514.5 126.4L515.0 127.3L515.5 127.8L516.0 127.5L516.5 127.9L517.0 127.8L517.5 127.9L518.0 127.8L518.5 128.0L519.0 127.7L519.5 127.7L520.0 127.7L520.5 128.0L521.0 127.9L521.5 127.5L522.0 127.4L522.5 127.6L523.0 127.8L523.5 127.4L524.0 127.8L524.5 127.7L525.0 127.5L525.5 127.6L526.0 126.4L526.5 127.3L527.0 127.6L527.5 127.5L528.0 127.9L528.5 127.8L529.0 127.9L529.5 129.2L530.0 129.2L530.5 129.0L531.0 129.0L531.5 129.1L532.0 129.2L532.5 129.2L533.0 129.0L533.5 129.1L534.0 129.0L534.5 129.1L535.0 129.0L535.5 129.0L536.0 129.0L536.5 129.0L537.0 129.1L537.5 129.1L538.0 129.2L538.5 129.1L539.0 129.1L539.5 128.9L540.0 129.1L540.5 129.1L541.0 129.0L541.5 129.1L542.0 129.1L542.5 129.1L543.0 129.0L543.5 129.1L544.0 129.0L544.5 129.1L545.0 129.2L545.5 129.1L546.0 129.0L546.5 129.2L547.0 129.1L547.5 129.1L548.0 129.1L548.5 129.2L549.0 129.0L549.5 129.0L550.0 129.1L550.5 129.1L551.0 129.1L551.5 128.4L552.0 127.3L552.5 128.1L553.0 128.7L553.5 128.9L554.0 129.0L554.5 129.2L555.0 129.0L555.5 129.1L556.0 128.9L556.5 128.9L557.0 129.1L557.5 129.1L558.0 129.1L558.5 129.1L559.0 129.0L559.5 129.0L560.0 129.1L560.5 129.2L561.0 129.2L561.5 129.1L562.0 129.1L562.5 129.1L563.0 128.9L563.5 129.1L564.0 129.0L564.5 129.0L565.0 129.1L565.5 128.9L566.0 129.1L566.5 129.1L567.0 129.1L567.5 129.1L568.0 129.0L568.5 129.1L569.0 129.1L569.5 129.0L570.0 129.2L570.5 129.0L571.0 129.1L571.5 129.0L572.0 129.1L572.5 129.0L573.0 129.0L573.5 129.1L574.0 129.1L574.5 129.2L575.0 129.1L575.5 129.2L576.0 129.1L576.5 129.0L577.0 129.1L577.5 129.1L578.0 129.0L578.5 129.0L579.0 128.4L579.5 126.1L580.0 124.0L580.5 125.3L581.0 126.2L581.5 126.9L582.0 127.6L582.5 128.0L583.0 128.3L583.5 128.6L584.0 128.9L584.5 129.0L585.0 129.0L585.5 129.1L586.0 128.9L586.5 129.0L587.0 129.1L587.5 128.9L588.0 129.1L588.5 128.9L589.0 129.1L589.5 128.9L590.0 129.0L590.5 129.2L591.0 128.9L591.5 129.2L592.0 129.2L592.5 129.1L593.0 129.1L593.5 129.1L594.0 129.2L594.5 129.1L595.0 129.2L595.5 129.2L596.0 129.1L596.5 129.1L597.0 129.0L597.5 129.1L598.0 129.0L598.5 128.9L599.0 129.0L599.5 128.9L600.0 129.2L600.5 129.1L601.0 128.9L601.5 129.2L602.0 129.0L602.5 129.0L603.0 128.9L603.5 129.0L604.0 128.9L604.5 129.1L605.0 129.1L605.5 128.3L606.0 127.4L606.5 128.2L607.0 128.9L607.5 128.9L608.0 129.2L608.5 129.1L609.0 128.9L609.5 129.0L610.0 129.0L610.5 128.9L611.0 128.9L611.5 129.0L612.0 129.1L612.5 129.2L613.0 128.9L613.5 129.0L614.0 129.0L614.5 129.1L615.0 129.2L615.5 129.0L616.0 128.9L616.5 128.9L617.0 129.0L617.5 128.9L618.0 128.8L618.5 127.8L619.0 127.9L619.5 128.5L620.0 129.0L620.5 129.2L621.0 129.1L621.5 129.2L622.0 129.1L622.5 129.1L623.0 129.0L623.5 128.9L624.0 129.0L624.5 129.0L625.0 129.0L625.5 129.1L626.0 129.0L626.5 129.0L627.0 129.1L627.5 129.0L628.0 129.0L628.5 128.9L629.0 129.0L629.5 129.1L630.0 129.1L630.5 129.1L631.0 129.0L631.5 129.1L632.0 128.3L632.5 129.0L633.0 128.9L633.5 129.0L634.0 129.0L634.5 128.9L635.0 129.1L635.5 129.1L636.0 128.9L636.5 129.0L637.0 129.0L637.5 129.0L638.0 129.1L638.5 129.2L639.0 129.0L639.5 129.2L640.0 129.2L640.5 129.0L641.0 129.1L641.5 129.1L642.0 129.0L642.5 129.2L643.0 129.0L643.5 129.1L644.0 129.1L644.5 129.0L645.0 129.1L645.5 128.9L646.0 129.1L646.5 129.1L647.0 128.9L647.5 129.0L648.0 129.0L648.5 129.1L649.0 129.0L649.5 129.1L650.0 129.1L650.5 129.1L651.0 129.1L651.5 129.0L652.0 129.0L652.5 129.0L653.0 128.9L653.5 129.1L654.0 129.0L654.5 129.1L655.0 129.0L655.5 129.1L656.0 129.0L656.5 129.1L657.0 129.1L657.5 129.2L658.0 129.1L658.5 128.1L659.0 127.0L659.5 127.7L660.0 128.2L660.5 128.9L661.0 129.1L661.5 128.9L662.0 129.1L662.5 129.2L663.0 129.2L663.5 128.9L664.0 128.9L664.5 129.2L665.0 129.0L665.5 129.0L666.0 129.0L666.5 129.0L667.0 129.1L667.5 129.1L668.0 129.1L668.5 129.1L669.0 129.1L669.5 129.0L670.0 129.1L670.5 129.0L671.0 128.9L671.5 129.0L672.0 129.0L672.5 129.0L673.0 128.9L673.5 128.9L674.0 129.0L674.5 129.0L675.0 129.2L675.5 129.0L676.0 129.0L676.5 129.1L677.0 129.0L677.5 128.9L678.0 129.1L678.5 129.2L679.0 129.2L679.5 129.1L680.0 129.2L680.5 129.0L681.0 129.1L681.5 129.1L682.0 129.0L682.5 129.0L683.0 129.0L683.5 128.9L684.0 129.1L684.5 129.1L685.0 128.8L685.5 126.9L686.0 125.4L686.5 126.1L687.0 127.1L687.5 127.6L688.0 128.2L688.5 128.7L689.0 129.0L689.5 129.2L690.0 129.2L690.5 129.0L691.0 129.0L691.5 129.0L692.0 129.0L692.5 129.1L693.0 129.0L693.5 129.0L694.0 129.1L694.5 129.0L695.0 129.1L695.5 129.1L696.0 129.1L696.5 129.1L697.0 129.1L697.5 128.9L698.0 128.9L698.5 128.7L699.0 128.7L699.5 129.1L700.0 129.2L700.5 129.2L701.0 129.2L701.5 129.0L702.0 129.0L702.5 129.2L703.0 129.0L703.5 129.1L704.0 129.0L704.5 128.9L705.0 129.1L705.5 128.9L706.0 129.0L706.5 129.0L707.0 129.0L707.5 129.1L708.0 129.1L708.5 129.0L709.0 129.1L709.5 129.1L710.0 129.0L710.5 129.0L711.0 129.0L711.5 129.1L712.0 129.0L712.5 127.9L713.0 127.8L713.5 128.4L714.0 129.0L714.5 128.9L715.0 128.9L715.5 129.0L716.0 128.9L716.5 128.9L717.0 129.1L717.5 129.1L718.0 129.0L718.5 129.1L719.0 129.1L719.5 129.1L720.0 129.1L720.5 129.0L721.0 129.1L721.5 129.1L722.0 128.9L722.5 129.0L723.0 128.9L723.5 129.1L724.0 129.0L724.5 128.4L725.0 129.0L725.5 129.0L726.0 129.1L726.5 129.0L727.0 129.0L727.5 129.1L728.0 129.1L728.5 129.0L729.0 129.1L729.5 129.1L730.0 129.0L730.5 129.0L731.0 129.0L731.5 129.1L732.0 129.0L732.5 129.1L733.0 129.1L733.5 129.2L734.0 129.0L734.5 129.0L735.0 129.2L735.5 129.0L736.0 129.2L736.5 129.1L737.0 129.1L737.5 129.1L738.0 129.1L738.5 129.1L739.0 128.2L739.5 126.7L740.0 126.9L740.5 127.4L741.0 128.1L741.5 128.5L742.0 128.9L742.5 129.2L743.0 129.0L743.5 129.2L744.0 129.0L744.5 128.9L745.0 129.1L745.5 129.2L746.0 129.0L746.5 129.0L747.0 129.1L747.5 129.0L748.0 129.0L748.5 129.1L749.0 129.0L749.5 129.1L750.0 129.0L750.5 129.0L751.0 129.0L751.5 129.0L752.0 129.2L752.5 129.0L753.0 129.1L753.5 129.1L754.0 129.0L754.5 128.9L755.0 129.0L755.5 129.1L756.0 129.0L756.5 129.0L757.0 129.1L757.5 129.1L758.0 129.1L758.5 129.1L759.0 129.0L759.5 129.0L760.0 129.0L760.5 129.2L761.0 129.0L761.5 129.1L762.0 129.0L762.5 129.0L763.0 129.2L763.5 129.2L764.0 129.0L764.5 128.4L765.0 127.4L765.5 128.1L766.0 128.7L766.5 128.9L767.0 129.0L767.5 129.0L768.0 129.0L768.5 129.0L769.0 129.0L769.5 129.1L770.0 129.1L770.5 129.1L771.0 129.1L771.5 129.2L772.0 129.1L772.5 129.0L773.0 129.1L773.5 129.0L774.0 129.1L774.5 129.1L775.0 129.1L775.5 128.9L776.0 129.2L776.5 129.0L777.0 129.1L777.5 129.1L778.0 129.2L778.5 129.0L779.0 129.1L779.5 129.0L780.0 129.0L780.5 129.1L781.0 129.1L781.5 129.1L782.0 129.2L782.5 128.9L783.0 128.9L783.5 129.1L784.0 129.1L784.5 129.1L785.0 129.0L785.5 129.1L786.0 129.1L786.5 129.1L787.0 129.0L787.5 129.1L788.0 129.0L788.5 129.2L789.0 129.2L789.5 128.9L790.0 129.1L790.5 129.0L791.0 128.8L791.5 127.1L792.0 125.4L792.5 126.3L793.0 127.2L793.5 127.7L794.0 128.2L794.5 128.7L795.0 129.0L795.5 129.0L796.0 129.1L796.5 129.1L797.0 129.1L797.5 129.1L798.0 129.1L798.5 129.1L799.0 129.2L799.5 129.2L800.0 129.1L800.5 129.0L801.0 129.1L801.5 128.9L802.0 129.0L802.5 129.0L803.0 129.0L803.5 128.7L804.0 128.7L804.5 129.0L805.0 128.9L805.5 129.0L806.0 129.0L806.5 129.1L807.0 129.1L807.5 129.1L808.0 129.0L808.5 128.9L809.0 129.1L809.5 129.0L810.0 128.9L810.5 129.2L811.0 129.1L811.5 128.9L812.0 129.0L812.5 129.0L813.0 129.1L813.5 129.1L814.0 129.2L814.5 129.1L815.0 129.1L815.5 129.2L816.0 129.0L816.5 129.0L817.0 129.1L817.5 128.0L818.0 127.6L818.5 128.5L819.0 128.9L819.5 129.0L820.0 129.1L820.5 129.2L821.0 129.0L821.5 129.0L822.0 129.0L822.5 129.2L823.0 129.0L823.5 129.2L824.0 129.1L824.5 129.0L825.0 129.0L825.5 129.1L826.0 129.1L826.5 129.1L827.0 129.0L827.5 129.0L828.0 129.1L828.5 129.0L829.0 129.0L829.5 129.0L830.0 128.9L830.5 128.2L831.0 128.4L831.5 129.0L832.0 129.0L832.5 129.0L833.0 129.2L833.5 128.9L834.0 129.0L834.5 129.1L835.0 129.0L835.5 129.2L836.0 129.2L836.5 129.2L837.0 129.1L837.5 129.0L838.0 129.0L838.5 129.1L839.0 129.1L839.5 129.0L840.0 129.1L840.5 129.1L841.0 129.1L841.5 129.0L842.0 129.0L842.5 129.0L843.0 129.2L843.5 129.1L844.0 129.0L844.5 129.0L845.0 129.1L845.5 129.2L846.0 129.1L846.5 129.0L847.0 129.0L847.5 129.0L848.0 129.0L848.5 129.1L849.0 128.9L849.5 129.0L850.0 129.1L850.5 128.9L851.0 129.1L851.5 129.0L852.0 129.0L852.5 129.0L853.0 129.1L853.5 129.1L854.0 129.1L854.5 129.1L855.0 129.0L855.5 128.8L856.0 128.6L856.5 129.0L857.0 129.0L857.5 128.9L858.0 129.2L858.5 129.1L859.0 129.1L859.5 129.1L860.0 129.1L860.5 128.9L861.0 129.0L861.5 129.1L862.0 129.1L862.5 129.1L863.0 128.9L863.5 129.0L864.0 129.0L864.5 129.1L865.0 129.1L865.5 129.0L866.0 129.1L866.5 128.9L867.0 129.0L867.5 129.0L868.0 129.1L868.5 129.2L869.0 129.1L869.5 129.1L870.0 129.2L870.5 129.0L871.0 129.1L871.5 129.1L872.0 127.4L872.5 125.6L873.0 125.8L873.5 126.7L874.0 127.3L874.5 127.8L875.0 128.4L875.5 128.7L876.0 128.9L876.5 129.0L877.0 129.1L877.5 128.9L878.0 129.1L878.5 129.1L879.0 129.1L879.5 129.1L880.0 128.9L880.5 129.1L881.0 129.0L881.5 129.0L882.0 128.9L882.5 129.1L883.0 129.0L883.5 129.1L884.0 129.1L884.5 129.0L885.0 129.1L885.5 129.1L886.0 128.9L886.5 129.1L887.0 129.0L887.5 129.2L888.0 129.0L888.5 129.1L889.0 129.1L889.5 129.2L890.0 129.2L890.5 129.0L891.0 129.2L891.5 129.1L892.0 129.2L892.5 129.1L893.0 129.1L893.5 129.0L894.0 128.9L894.5 129.0L895.0 129.1L895.5 128.9L896.0 129.2L896.5 129.1L897.0 126.7L897.5 123.8L898.0 122.8L898.5 124.3L899.0 125.2L899.5 125.8L900.0 126.7L900.5 127.3L901.0 127.8L901.5 128.1L902.0 128.4L902.5 128.8L903.0 129.0L903.5 129.2L904.0 129.0L904.5 128.9L905.0 129.1L905.5 129.2L906.0 129.1L906.5 129.0L907.0 129.0L907.5 129.1L908.0 129.1L908.5 129.1L909.0 129.0L909.5 128.5L910.0 128.9L910.5 129.0L911.0 128.9L911.5 129.0L912.0 129.1L912.5 129.1L913.0 129.0L913.5 128.9L914.0 129.1L914.5 129.0L915.0 129.2L915.5 129.0L916.0 129.1L916.5 129.0L917.0 129.0L917.5 129.0L918.0 129.2L918.5 129.2L919.0 129.1L919.5 129.0L920.0 129.1L920.5 129.1L921.0 129.0L921.5 129.2L922.0 129.2L922.5 129.1L923.0 129.1L923.5 129.1L924.0 127.9L924.5 127.8L925.0 127.8L925.5 127.5L926.0 127.7L926.5 127.9L927.0 127.9L927.5 127.5L928.0 127.5L928.5 127.7L929.0 127.7L929.5 127.9L930.0 127.7L930.5 127.9L931.0 127.6L931.5 127.7L932.0 127.4L932.5 127.8L933.0 127.7L933.5 127.5L934.0 128.0L934.5 127.7L935.0 127.4L935.5 129.0L936.0 129.1L936.5 129.0L937.0 129.1L937.5 129.0L938.0 129.0L938.5 129.0L939.0 129.1L939.5 129.0L940.0 129.1L940.5 129.0L941.0 129.2L941.5 129.0L942.0 129.0L942.5 129.2L943.0 127.2L943.5 127.1L944.0 127.5L944.5 127.2L945.0 127.1L945.5 127.1L946.0 127.3L946.5 127.5L947.0 127.5L947.5 127.1L948.0 127.4L948.5 127.5L949.0 127.0L949.5 127.0L950.0 126.9L950.5 126.4L951.0 124.3L951.5 125.2L952.0 126.4L952.5 126.8L953.0 126.7L953.5 127.5L954.0 127.4L954.5 127.1L955.0 126.7L955.5 127.2L956.0 127.3L956.5 127.0L957.0 127.2L957.5 127.0L958.0 127.4L958.5 127.3L959.0 127.1L959.5 127.1L960.0 127.6L960.5 127.1L961.0 127.1L961.5 127.0L962.0 126.9L962.5 127.0L963.0 127.3L963.5 126.8L964.0 127.3L964.5 127.3L965.0 126.8L965.5 127.5L966.0 127.4L966.5 126.8L967.0 127.6L967.5 128.9L968.0 129.0L968.5 129.0L969.0 129.1L969.5 129.1L970.0 129.2L970.5 129.2L971.0 129.2L971.5 129.1L972.0 129.1L972.5 129.0L973.0 129.2L973.5 129.1L974.0 128.9L974.5 129.1L975.0 129.1L975.5 129.1L976.0 129.0L976.5 129.1L977.0 129.2L977.5 129.0L978.0 128.3L978.5 127.4L979.0 128.2L979.5 128.8L980.0 129.1L980.5 129.1L981.0 129.1L981.5 129.0L982.0 129.1L982.5 129.0L983.0 129.2L983.5 129.2L984.0 129.1L984.5 129.2L985.0 129.2L985.5 129.0L986.0 129.1L986.5 129.1L987.0 129.0L987.5 129.1L988.0 129.1L988.5 129.1L989.0 129.0L989.5 129.1L990.0 128.5L990.5 129.0L991.0 129.1L991.5 129.1L992.0 129.1L992.5 129.0L993.0 129.0L993.5 129.1L994.0 129.1L994.5 129.1L995.0 129.0L995.5 129.0L996.0 129.1L996.5 129.1L997.0 129.1L997.5 129.1L998.0 129.0L998.5 129.1L999.0 129.0L999.5 129.1L1000.0 129.0L1000.5 129.2L1001.0 129.1L1001.5 129.0L1002.0 129.0L1002.5 129.0L1003.0 129.0L1003.5 129.1L1004.0 128.0L1004.5 125.5L1005.0 123.2L1005.5 124.5L1006.0 125.7L1006.5 126.6L1007.0 127.5L1007.5 127.8L1008.0 128.5L1008.5 128.8L1009.0 129.0L1009.5 128.9L1010.0 129.0L1010.5 129.1L1011.0 129.0L1011.5 129.1L1012.0 129.0L1012.5 129.1L1013.0 129.0L1013.5 129.0L1014.0 129.0L1014.5 129.1L1015.0 128.5L1015.5 129.0L1016.0 129.1L1016.5 129.1L1017.0 129.1L1017.5 129.1L1018.0 129.1L1018.5 129.1L1019.0 129.1L1019.5 129.1L1020.0 129.0L1020.5 129.1L1021.0 129.0L1021.5 129.1L1022.0 129.1L1022.5 128.9L1023.0 129.0L1023.5 129.2L1024.0 129.0L1024.5 129.0L1025.0 129.0L1025.5 128.9L1026.0 129.0L1026.5 129.1L1027.0 128.9L1027.5 129.1L1028.0 129.0L1028.5 129.1L1029.0 129.1L1029.5 128.5L1030.0 127.4L1030.5 128.2L1031.0 128.8L1031.5 129.1L1032.0 129.0L1032.5 129.1L1033.0 129.1L1033.5 129.1L1034.0 129.0L1034.5 129.0L1035.0 129.1L1035.5 129.0L1036.0 129.1L1036.5 129.0L1037.0 129.2L1037.5 129.0L1038.0 129.2L1038.5 129.0L1039.0 129.0L1039.5 129.1L1040.0 129.0L1040.5 129.0L1041.0 129.1L1041.5 129.2L1042.0 129.0L1042.5 128.5L1043.0 127.2L1043.5 128.1L1044.0 128.9L1044.5 128.9L1045.0 129.2L1045.5 129.0L1046.0 129.1L1046.5 129.1L1047.0 129.0L1047.5 129.0L1048.0 129.0L1048.5 128.9L1049.0 129.0L1049.5 129.0L1050.0 129.0L1050.5 129.1L1051.0 129.2L1051.5 129.1L1052.0 129.1L1052.5 129.0L1053.0 129.0L1053.5 128.9L1054.0 129.1L1054.5 129.0L1055.0 129.1L1055.5 129.1L1056.0 128.9L1056.5 128.3L1057.0 128.9L1057.5 129.1L1058.0 129.1L1058.5 129.1L1059.0 129.1L1059.5 129.0L1060.0 129.0L1060.5 129.0L1061.0 129.0L1061.5 129.0L1062.0 129.1L1062.5 129.0L1063.0 129.0L1063.5 129.2L1064.0 129.2L1064.5 129.1L1065.0 129.0L1065.5 129.0L1066.0 129.1L1066.5 129.0L1067.0 129.2L1067.5 129.2L1068.0 129.1L1068.5 129.0L1069.0 128.5L1069.5 128.9L1070.0 129.1L1070.5 128.9L1071.0 129.0L1071.5 129.2L1072.0 129.1L1072.5 129.0L1073.0 129.2L1073.5 129.1L1074.0 129.1L1074.5 129.1L1075.0 129.0L1075.5 129.2L1076.0 128.9L1076.5 129.0L1077.0 129.1L1077.5 129.0L1078.0 129.1L1078.5 129.0L1079.0 129.1L1079.5 129.1L1080.0 129.2L1080.5 129.1L1081.0 129.0L1081.5 129.0L1082.0 128.9L1082.5 127.7L1083.0 126.4L1083.5 127.4L1084.0 127.9L1084.5 128.6L1085.0 129.0L1085.5 129.0L1086.0 129.1L1086.5 129.0L1087.0 129.1L1087.5 129.1L1088.0 129.0L1088.5 129.1L1089.0 129.1L1089.5 129.2L1090.0 128.9L1090.5 129.1L1091.0 129.1L1091.5 129.2L1092.0 129.0L1092.5 128.9L1093.0 129.0L1093.5 128.9L1094.0 128.9L1094.5 129.0L1095.0 129.1L1095.5 129.0L1096.0 129.1L1096.5 128.9L1097.0 129.1L1097.5 129.0L1098.0 129.0L1098.5 128.9L1099.0 128.9L1099.5 129.0L1100.0 129.0L1100.5 129.2L1101.0 129.2L1101.5 128.9L1102.0 129.2L1102.0 131.6L1101.5 131.9L1101.0 131.6L1100.5 131.7L1100.0 131.7L1099.5 131.8L1099.0 131.8L1098.5 131.7L1098.0 131.7L1097.5 131.7L1097.0 131.7L1096.5 131.8L1096.0 131.7L1095.5 131.7L1095.0 131.7L1094.5 131.8L1094.0 131.9L1093.5 131.7L1093.0 131.7L1092.5 131.9L1092.0 131.8L1091.5 131.7L1091.0 131.8L1090.5 131.7L1090.0 131.7L1089.5 131.6L1089.0 131.7L1088.5 131.8L1088.0 131.9L1087.5 131.7L1087.0 131.7L1086.5 131.8L1086.0 131.6L1085.5 131.7L1085.0 131.8L1084.5 132.1L1084.0 132.5L1083.5 133.3L1083.0 133.9L1082.5 133.0L1082.0 131.8L1081.5 131.8L1081.0 131.8L1080.5 131.7L1080.0 131.6L1079.5 131.7L1079.0 131.6L1078.5 131.8L1078.0 131.7L1077.5 131.7L1077.0 131.6L1076.5 131.7L1076.0 131.8L1075.5 131.7L1075.0 131.7L1074.5 131.7L1074.0 131.7L1073.5 131.7L1073.0 131.6L1072.5 131.8L1072.0 131.7L1071.5 131.7L1071.0 131.8L1070.5 131.8L1070.0 131.7L1069.5 131.9L1069.0 132.2L1068.5 131.8L1068.0 131.7L1067.5 131.6L1067.0 131.6L1066.5 131.7L1066.0 131.7L1065.5 131.9L1065.0 131.8L1064.5 131.6L1064.0 131.7L1063.5 131.6L1063.0 131.8L1062.5 131.8L1062.0 131.6L1061.5 131.6L1061.0 131.8L1060.5 131.9L1060.0 131.8L1059.5 131.8L1059.0 131.7L1058.5 131.7L1058.0 131.7L1057.5 131.6L1057.0 131.9L1056.5 132.3L1056.0 131.8L1055.5 131.7L1055.0 131.7L1054.5 131.8L1054.0 131.7L1053.5 131.8L1053.0 131.8L1052.5 131.8L1052.0 131.7L1051.5 131.7L1051.0 131.7L1050.5 131.6L1050.0 131.7L1049.5 131.7L1049.0 131.8L1048.5 131.8L1048.0 131.8L1047.5 131.8L1047.0 131.8L1046.5 131.8L1046.0 131.7L1045.5 131.8L1045.0 131.7L1044.5 131.8L1044.0 131.9L1043.5 132.4L1043.0 133.2L1042.5 132.4L1042.0 131.8L1041.5 131.6L1041.0 131.7L1040.5 131.9L1040.0 131.8L1039.5 131.6L1039.0 131.8L1038.5 131.8L1038.0 131.7L1037.5 131.7L1037.0 131.7L1036.5 131.8L1036.0 131.7L1035.5 131.9L1035.0 131.7L1034.5 131.8L1034.0 131.8L1033.5 131.8L1033.0 131.8L1032.5 131.7L1032.0 131.8L1031.5 131.7L1031.0 132.0L1030.5 132.5L1030.0 133.3L1029.5 132.3L1029.0 131.7L1028.5 131.8L1028.0 131.8L1027.5 131.7L1027.0 131.8L1026.5 131.7L1026.0 131.8L1025.5 131.8L1025.0 131.8L1024.5 131.8L1024.0 131.7L1023.5 131.7L1023.0 131.8L1022.5 131.8L1022.0 131.7L1021.5 131.7L1021.0 131.7L1020.5 131.6L1020.0 131.7L1019.5 131.7L1019.0 131.7L1018.5 131.7L1018.0 131.6L1017.5 131.7L1017.0 131.6L1016.5 131.7L1016.0 131.7L1015.5 131.9L1015.0 132.2L1014.5 131.8L1014.0 131.7L1013.5 131.7L1013.0 131.7L1012.5 131.7L1012.0 131.8L1011.5 131.7L1011.0 131.7L1010.5 131.7L1010.0 131.7L1009.5 131.9L1009.0 131.9L1008.5 132.0L1008.0 132.3L1007.5 132.7L1007.0 133.3L1006.5 133.8L1006.0 134.7L1005.5 135.7L1005.0 136.8L1004.5 134.8L1004.0 132.5L1003.5 131.8L1003.0 131.8L1002.5 131.8L1002.0 131.7L1001.5 131.8L1001.0 131.7L1000.5 131.6L1000.0 131.8L999.5 131.7L999.0 131.8L998.5 131.6L998.0 131.8L997.5 131.7L997.0 131.7L996.5 131.6L996.0 131.8L995.5 131.8L995.0 131.7L994.5 131.6L994.0 131.8L993.5 131.6L993.0 131.7L992.5 131.8L992.0 131.6L991.5 131.7L991.0 131.8L990.5 131.9L990.0 132.2L989.5 131.8L989.0 131.8L988.5 131.8L988.0 131.7L987.5 131.6L987.0 131.8L986.5 131.8L986.0 131.6L985.5 131.7L985.0 131.7L984.5 131.7L984.0 131.6L983.5 131.7L983.0 131.6L982.5 131.8L982.0 131.7L981.5 131.7L981.0 131.7L980.5 131.7L980.0 131.7L979.5 132.0L979.0 132.5L978.5 133.2L978.0 132.3L977.5 131.9L977.0 131.6L976.5 131.8L976.0 131.8L975.5 131.7L975.0 131.7L974.5 131.7L974.0 131.8L973.5 131.7L973.0 131.6L972.5 131.7L972.0 131.7L971.5 131.8L971.0 131.7L970.5 131.6L970.0 131.7L969.5 131.7L969.0 131.7L968.5 131.8L968.0 131.7L967.5 131.8L967.0 132.9L966.5 133.5L966.0 133.1L965.5 133.1L965.0 133.5L964.5 133.2L964.0 133.2L963.5 133.7L963.0 133.4L962.5 133.6L962.0 133.8L961.5 133.6L961.0 133.5L960.5 133.4L960.0 133.1L959.5 133.5L959.0 133.5L958.5 133.1L958.0 133.2L957.5 133.7L957.0 133.4L956.5 133.6L956.0 133.3L955.5 133.1L955.0 133.5L954.5 133.2L954.0 133.3L953.5 133.2L953.0 133.7L952.5 133.4L952.0 134.1L951.5 134.7L951.0 136.0L950.5 133.9L950.0 133.6L949.5 133.4L949.0 133.4L948.5 133.2L948.0 133.3L947.5 133.7L947.0 133.3L946.5 133.3L946.0 133.1L945.5 133.5L945.0 133.4L944.5 133.2L944.0 133.1L943.5 133.2L943.0 133.4L942.5 131.6L942.0 131.8L941.5 131.8L941.0 131.6L940.5 131.8L940.0 131.8L939.5 131.8L939.0 131.7L938.5 131.8L938.0 131.8L937.5 131.8L937.0 131.7L936.5 131.7L936.0 131.8L935.5 131.7L935.0 133.1L934.5 132.9L934.0 132.8L933.5 133.1L933.0 132.9L932.5 132.9L932.0 133.1L931.5 133.0L931.0 133.1L930.5 132.8L930.0 132.9L929.5 132.7L929.0 133.1L928.5 132.9L928.0 133.3L927.5 132.9L927.0 132.8L926.5 132.6L926.0 133.0L925.5 133.3L925.0 132.8L924.5 132.9L924.0 132.7L923.5 131.7L923.0 131.6L922.5 131.8L922.0 131.6L921.5 131.6L921.0 131.8L920.5 131.7L920.0 131.7L919.5 131.8L919.0 131.8L918.5 131.6L918.0 131.6L917.5 131.7L917.0 131.7L916.5 131.7L916.0 131.7L915.5 131.8L915.0 131.7L914.5 131.9L914.0 131.7L913.5 131.8L913.0 131.8L912.5 131.8L912.0 131.6L911.5 131.7L911.0 131.9L910.5 131.7L910.0 131.9L909.5 132.1L909.0 131.9L908.5 131.7L908.0 131.7L907.5 131.8L907.0 131.7L906.5 131.8L906.0 131.7L905.5 131.6L905.0 131.7L904.5 131.8L904.0 131.8L903.5 131.8L903.0 131.7L902.5 132.0L902.0 132.3L901.5 132.5L901.0 132.7L900.5 133.3L900.0 133.7L899.5 134.5L899.0 135.3L898.5 136.0L898.0 137.1L897.5 136.1L897.0 133.9L896.5 131.7L896.0 131.7L895.5 131.9L895.0 131.7L894.5 131.9L894.0 131.9L893.5 131.8L893.0 131.7L892.5 131.7L892.0 131.6L891.5 131.7L891.0 131.7L890.5 131.9L890.0 131.7L889.5 131.6L889.0 131.8L888.5 131.7L888.0 131.8L887.5 131.6L887.0 131.8L886.5 131.7L886.0 131.9L885.5 131.8L885.0 131.7L884.5 131.8L884.0 131.6L883.5 131.7L883.0 131.8L882.5 131.7L882.0 131.8L881.5 131.7L881.0 131.8L880.5 131.7L880.0 131.9L879.5 131.8L879.0 131.7L878.5 131.7L878.0 131.7L877.5 131.8L877.0 131.8L876.5 131.8L876.0 131.8L875.5 132.0L875.0 132.3L874.5 132.7L874.0 133.2L873.5 133.8L873.0 134.6L872.5 134.8L872.0 133.1L871.5 131.8L871.0 131.7L870.5 131.9L870.0 131.7L869.5 131.7L869.0 131.7L868.5 131.6L868.0 131.7L867.5 131.8L867.0 131.8L866.5 131.8L866.0 131.8L865.5 131.9L865.0 131.7L864.5 131.8L864.0 131.8L863.5 131.8L863.0 131.8L862.5 131.7L862.0 131.8L861.5 131.7L861.0 131.8L860.5 131.9L860.0 131.7L859.5 131.7L859.0 131.7L858.5 131.7L858.0 131.7L857.5 131.9L857.0 131.7L856.5 131.7L856.0 132.1L855.5 131.9L855.0 131.8L854.5 131.7L854.0 131.7L853.5 131.7L853.0 131.6L852.5 131.8L852.0 131.7L851.5 131.7L851.0 131.7L850.5 131.8L850.0 131.8L849.5 131.8L849.0 131.8L848.5 131.7L848.0 131.7L847.5 131.8L847.0 131.8L846.5 131.7L846.0 131.7L845.5 131.7L845.0 131.7L844.5 131.8L844.0 131.8L843.5 131.7L843.0 131.6L842.5 131.8L842.0 131.8L841.5 131.8L841.0 131.7L840.5 131.7L840.0 131.7L839.5 131.9L839.0 131.7L838.5 131.7L838.0 131.7L837.5 131.7L837.0 131.7L836.5 131.7L836.0 131.6L835.5 131.7L835.0 131.8L834.5 131.7L834.0 131.8L833.5 131.8L833.0 131.6L832.5 131.9L832.0 131.8L831.5 131.8L831.0 132.2L830.5 132.6L830.0 131.8L829.5 131.8L829.0 131.8L828.5 131.8L828.0 131.8L827.5 131.7L827.0 131.8L826.5 131.6L826.0 131.7L825.5 131.7L825.0 131.8L824.5 131.9L824.0 131.7L823.5 131.6L823.0 131.8L822.5 131.7L822.0 131.7L821.5 131.8L821.0 131.8L820.5 131.7L820.0 131.8L819.5 131.8L819.0 131.9L818.5 132.2L818.0 132.9L817.5 132.6L817.0 131.7L816.5 131.7L816.0 131.8L815.5 131.6L815.0 131.6L814.5 131.7L814.0 131.6L813.5 131.6L813.0 131.7L812.5 131.8L812.0 131.7L811.5 131.8L811.0 131.7L810.5 131.7L810.0 131.8L809.5 131.7L809.0 131.7L808.5 131.8L808.0 131.8L807.5 131.7L807.0 131.8L806.5 131.7L806.0 131.9L805.5 131.8L805.0 131.8L804.5 131.7L804.0 132.1L803.5 132.1L803.0 131.8L802.5 131.9L802.0 131.7L801.5 131.9L801.0 131.8L800.5 131.7L800.0 131.8L799.5 131.7L799.0 131.6L798.5 131.8L798.0 131.7L797.5 131.6L797.0 131.6L796.5 131.7L796.0 131.7L795.5 131.8L795.0 131.8L794.5 132.1L794.0 132.5L793.5 133.0L793.0 133.4L792.5 134.0L792.0 135.2L791.5 133.4L791.0 132.1L790.5 131.9L790.0 131.7L789.5 131.8L789.0 131.7L788.5 131.6L788.0 131.8L787.5 131.7L787.0 131.8L786.5 131.7L786.0 131.8L785.5 131.7L785.0 131.8L784.5 131.7L784.0 131.7L783.5 131.7L783.0 131.8L782.5 131.9L782.0 131.7L781.5 131.7L781.0 131.7L780.5 131.7L780.0 131.8L779.5 131.7L779.0 131.8L778.5 131.8L778.0 131.6L777.5 131.7L777.0 131.7L776.5 131.8L776.0 131.6L775.5 131.8L775.0 131.7L774.5 131.8L774.0 131.7L773.5 131.8L773.0 131.7L772.5 131.7L772.0 131.7L771.5 131.6L771.0 131.7L770.5 131.7L770.0 131.8L769.5 131.7L769.0 131.8L768.5 131.9L768.0 131.8L767.5 131.8L767.0 131.7L766.5 131.8L766.0 132.0L765.5 132.5L765.0 133.1L764.5 132.4L764.0 131.8L763.5 131.7L763.0 131.6L762.5 131.8L762.0 131.8L761.5 131.8L761.0 131.9L760.5 131.7L760.0 131.9L759.5 131.8L759.0 131.7L758.5 131.7L758.0 131.6L757.5 131.8L757.0 131.7L756.5 131.8L756.0 131.7L755.5 131.7L755.0 131.7L754.5 131.8L754.0 131.8L753.5 131.7L753.0 131.7L752.5 131.7L752.0 131.7L751.5 131.7L751.0 131.8L750.5 131.8L750.0 131.8L749.5 131.6L749.0 131.8L748.5 131.7L748.0 131.8L747.5 131.8L747.0 131.7L746.5 131.8L746.0 131.8L745.5 131.6L745.0 131.6L744.5 131.9L744.0 131.9L743.5 131.7L743.0 131.8L742.5 131.6L742.0 131.8L741.5 132.1L741.0 132.6L740.5 133.0L740.0 133.6L739.5 133.6L739.0 132.3L738.5 131.8L738.0 131.7L737.5 131.7L737.0 131.8L736.5 131.7L736.0 131.7L735.5 131.7L735.0 131.7L734.5 131.8L734.0 131.9L733.5 131.7L733.0 131.8L732.5 131.7L732.0 131.8L731.5 131.7L731.0 131.8L730.5 131.8L730.0 131.8L729.5 131.8L729.0 131.7L728.5 131.7L728.0 131.7L727.5 131.7L727.0 131.8L726.5 131.9L726.0 131.6L725.5 131.9L725.0 131.8L724.5 132.3L724.0 131.7L723.5 131.6L723.0 131.8L722.5 131.8L722.0 131.9L721.5 131.7L721.0 131.7L720.5 131.7L720.0 131.7L719.5 131.8L719.0 131.8L718.5 131.8L718.0 131.8L717.5 131.7L717.0 131.6L716.5 131.8L716.0 131.8L715.5 131.8L715.0 131.8L714.5 131.7L714.0 131.8L713.5 132.2L713.0 132.8L712.5 132.7L712.0 131.8L711.5 131.6L711.0 131.7L710.5 131.7L710.0 131.8L709.5 131.7L709.0 131.7L708.5 131.9L708.0 131.8L707.5 131.8L707.0 131.9L706.5 131.7L706.0 131.8L705.5 131.8L705.0 131.6L704.5 131.9L704.0 131.8L703.5 131.7L703.0 131.8L702.5 131.6L702.0 131.9L701.5 131.8L701.0 131.6L700.5 131.6L700.0 131.6L699.5 131.8L699.0 132.0L698.5 132.1L698.0 131.9L697.5 131.9L697.0 131.7L696.5 131.7L696.0 131.7L695.5 131.8L695.0 131.7L694.5 131.7L694.0 131.6L693.5 131.8L693.0 131.7L692.5 131.6L692.0 131.8L691.5 131.7L691.0 131.8L690.5 131.8L690.0 131.7L689.5 131.6L689.0 131.8L688.5 132.1L688.0 132.4L687.5 133.0L687.0 133.4L686.5 134.1L686.0 135.1L685.5 133.7L685.0 132.0L684.5 131.7L684.0 131.8L683.5 131.9L683.0 131.8L682.5 131.8L682.0 131.8L681.5 131.6L681.0 131.8L680.5 131.8L680.0 131.7L679.5 131.6L679.0 131.7L678.5 131.7L678.0 131.6L677.5 131.8L677.0 131.8L676.5 131.7L676.0 131.7L675.5 131.7L675.0 131.7L674.5 131.8L674.0 131.7L673.5 131.9L673.0 131.8L672.5 131.8L672.0 131.8L671.5 131.9L671.0 131.8L670.5 131.9L670.0 131.6L669.5 131.8L669.0 131.6L668.5 131.8L668.0 131.7L667.5 131.7L667.0 131.7L666.5 131.7L666.0 131.8L665.5 131.8L665.0 131.9L664.5 131.6L664.0 131.8L663.5 131.9L663.0 131.7L662.5 131.6L662.0 131.7L661.5 131.8L661.0 131.8L660.5 131.9L660.0 132.3L659.5 133.0L659.0 133.6L658.5 132.6L658.0 131.6L657.5 131.7L657.0 131.7L656.5 131.7L656.0 131.7L655.5 131.7L655.0 131.8L654.5 131.7L654.0 131.8L653.5 131.7L653.0 131.8L652.5 131.8L652.0 131.7L651.5 131.9L651.0 131.7L650.5 131.8L650.0 131.7L649.5 131.7L649.0 131.8L648.5 131.7L648.0 131.7L647.5 131.9L647.0 131.8L646.5 131.7L646.0 131.8L645.5 131.8L645.0 131.7L644.5 131.9L644.0 131.6L643.5 131.8L643.0 131.8L642.5 131.7L642.0 131.8L641.5 131.7L641.0 131.8L640.5 131.7L640.0 131.6L639.5 131.6L639.0 131.8L638.5 131.7L638.0 131.6L637.5 131.9L637.0 131.7L636.5 131.7L636.0 131.9L635.5 131.7L635.0 131.6L634.5 131.9L634.0 131.7L633.5 131.7L633.0 131.8L632.5 131.8L632.0 132.4L631.5 131.7L631.0 131.7L630.5 131.6L630.0 131.7L629.5 131.7L629.0 131.7L628.5 131.8L628.0 131.7L627.5 131.7L627.0 131.6L626.5 131.8L626.0 131.8L625.5 131.7L625.0 131.8L624.5 131.8L624.0 131.8L623.5 131.8L623.0 131.8L622.5 131.6L622.0 131.6L621.5 131.7L621.0 131.7L620.5 131.7L620.0 131.8L619.5 132.2L619.0 132.8L618.5 132.8L618.0 131.9L617.5 131.8L617.0 131.8L616.5 131.9L616.0 131.8L615.5 131.8L615.0 131.7L614.5 131.7L614.0 131.8L613.5 131.8L613.0 131.7L612.5 131.6L612.0 131.7L611.5 131.9L611.0 131.8L610.5 131.8L610.0 131.7L609.5 131.8L609.0 131.8L608.5 131.7L608.0 131.7L607.5 131.8L607.0 132.0L606.5 132.4L606.0 133.2L605.5 132.3L605.0 131.7L604.5 131.8L604.0 131.8L603.5 131.7L603.0 131.8L602.5 131.7L602.0 131.8L601.5 131.6L601.0 131.9L600.5 131.7L600.0 131.6L599.5 131.8L599.0 131.8L598.5 131.9L598.0 131.8L597.5 131.7L597.0 131.8L596.5 131.8L596.0 131.8L595.5 131.6L595.0 131.6L594.5 131.7L594.0 131.7L593.5 131.8L593.0 131.6L592.5 131.6L592.0 131.6L591.5 131.6L591.0 131.8L590.5 131.6L590.0 131.7L589.5 131.9L589.0 131.7L588.5 131.8L588.0 131.7L587.5 131.8L587.0 131.7L586.5 131.8L586.0 131.9L585.5 131.6L585.0 131.7L584.5 131.9L584.0 131.9L583.5 132.0L583.0 132.4L582.5 132.8L582.0 133.0L581.5 133.6L581.0 134.3L580.5 134.8L580.0 136.1L579.5 134.3L579.0 132.3L578.5 131.8L578.0 131.8L577.5 131.6L577.0 131.7L576.5 131.8L576.0 131.7L575.5 131.6L575.0 131.7L574.5 131.7L574.0 131.6L573.5 131.8L573.0 131.9L572.5 131.8L572.0 131.8L571.5 131.8L571.0 131.7L570.5 131.9L570.0 131.6L569.5 131.8L569.0 131.8L568.5 131.7L568.0 131.8L567.5 131.6L567.0 131.8L566.5 131.7L566.0 131.7L565.5 131.9L565.0 131.8L564.5 131.7L564.0 131.7L563.5 131.7L563.0 131.8L562.5 131.7L562.0 131.7L561.5 131.7L561.0 131.7L560.5 131.7L560.0 131.8L559.5 131.7L559.0 131.8L558.5 131.7L558.0 131.8L557.5 131.7L557.0 131.7L556.5 131.9L556.0 131.9L555.5 131.7L555.0 131.6L554.5 131.7L554.0 131.7L553.5 131.8L553.0 132.0L552.5 132.6L552.0 133.1L551.5 132.2L551.0 131.6L550.5 131.8L550.0 131.8L549.5 131.8L549.0 131.7L548.5 131.7L548.0 131.7L547.5 131.7L547.0 131.7L546.5 131.7L546.0 131.8L545.5 131.8L545.0 131.6L544.5 131.6L544.0 131.8L543.5 131.7L543.0 131.9L542.5 131.7L542.0 131.7L541.5 131.7L541.0 131.8L540.5 131.7L540.0 131.7L539.5 131.8L539.0 131.7L538.5 131.6L538.0 131.7L537.5 131.7L537.0 131.7L536.5 131.8L536.0 131.8L535.5 131.7L535.0 131.8L534.5 131.7L534.0 131.7L533.5 131.8L533.0 131.8L532.5 131.6L532.0 131.7L531.5 131.7L531.0 131.7L530.5 131.8L530.0 131.6L529.5 131.7L529.0 132.8L528.5 132.9L528.0 132.9L527.5 133.2L527.0 133.0L526.5 133.3L526.0 134.3L525.5 132.8L525.0 133.0L524.5 132.9L524.0 132.7L523.5 133.2L523.0 132.6L522.5 132.9L522.0 133.1L521.5 133.2L521.0 132.6L520.5 132.8L520.0 132.9L519.5 132.8L519.0 132.8L518.5 132.9L518.0 132.9L517.5 132.8L517.0 132.9L516.5 132.8L516.0 132.9L515.5 132.7L515.0 133.3L514.5 133.7L514.0 134.5L513.5 135.9L513.0 134.3L512.5 132.8L512.0 132.7L511.5 133.0L511.0 133.1L510.5 132.7L510.0 132.9L509.5 133.1L509.0 133.1L508.5 132.9L508.0 132.9L507.5 133.1L507.0 132.9L506.5 132.9L506.0 133.2L505.5 132.8L505.0 133.0L504.5 132.9L504.0 132.7L503.5 133.1L503.0 132.8L502.5 133.1L502.0 132.8L501.5 132.9L501.0 133.0L500.5 133.0L500.0 133.0L499.5 132.9L499.0 133.1L498.5 133.1L498.0 132.8L497.5 133.1L497.0 133.0L496.5 132.6L496.0 132.9L495.5 132.7L495.0 133.0L494.5 132.6L494.0 133.1L493.5 133.0L493.0 132.7L492.5 132.9L492.0 132.8L491.5 133.0L491.0 133.0L490.5 132.8L490.0 132.7L489.5 133.0L489.0 133.2L488.5 133.3L488.0 132.8L487.5 132.7L487.0 132.9L486.5 133.3L486.0 134.1L485.5 132.9L485.0 133.2L484.5 132.8L484.0 132.6L483.5 132.8L483.0 132.9L482.5 133.0L482.0 133.0L481.5 133.0L481.0 132.8L480.5 132.9L480.0 132.8L479.5 132.7L479.0 132.8L478.5 133.1L478.0 133.2L477.5 133.1L477.0 133.0L476.5 133.0L476.0 132.8L475.5 133.1L475.0 133.7L474.5 134.1L474.0 135.0L473.5 135.9L473.0 137.1L472.5 137.9L472.0 136.5L471.5 133.6L471.0 131.7L470.5 131.8L470.0 131.6L469.5 131.6L469.0 131.7L468.5 131.9L468.0 131.6L467.5 131.7L467.0 131.6L466.5 131.7L466.0 131.8L465.5 131.7L465.0 131.6L464.5 131.8L464.0 131.8L463.5 131.7L463.0 131.7L462.5 131.7L462.0 133.2L461.5 132.7L461.0 133.3L460.5 133.0L460.0 132.7L459.5 132.8L459.0 132.9L458.5 133.1L458.0 132.8L457.5 132.9L457.0 132.9L456.5 133.3L456.0 132.8L455.5 132.9L455.0 132.8L454.5 132.8L454.0 133.0L453.5 133.0L453.0 133.1L452.5 132.8L452.0 132.7L451.5 133.0L451.0 133.3L450.5 133.0L450.0 133.0L449.5 133.2L449.0 132.9L448.5 133.0L448.0 132.9L447.5 133.0L447.0 132.7L446.5 133.2L446.0 133.0L445.5 133.1L445.0 133.1L444.5 132.8L444.0 132.7L443.5 133.1L443.0 133.0L442.5 132.8L442.0 132.9L441.5 133.0L441.0 132.9L440.5 132.8L440.0 132.8L439.5 132.8L439.0 133.0L438.5 132.7L438.0 132.8L437.5 132.8L437.0 133.1L436.5 133.0L436.0 132.8L435.5 133.2L435.0 133.8L434.5 134.6L434.0 136.0L433.5 136.9L433.0 138.6L432.5 136.1L432.0 133.3L431.5 131.7L431.0 131.7L430.5 131.7L430.0 131.8L429.5 131.7L429.0 131.9L428.5 131.7L428.0 131.8L427.5 131.9L427.0 131.8L426.5 131.9L426.0 131.7L425.5 131.7L425.0 131.9L424.5 131.7L424.0 131.8L423.5 131.7L423.0 131.7L422.5 131.7L422.0 131.7L421.5 131.7L421.0 131.7L420.5 131.7L420.0 132.0L419.5 132.1L419.0 131.8L418.5 131.7L418.0 131.7L417.5 131.7L417.0 131.8L416.5 131.7L416.0 131.8L415.5 131.9L415.0 131.8L414.5 131.7L414.0 131.7L413.5 131.7L413.0 131.8L412.5 131.6L412.0 131.8L411.5 131.7L411.0 131.7L410.5 131.6L410.0 131.7L409.5 131.7L409.0 131.8L408.5 131.8L408.0 132.2L407.5 132.6L407.0 133.3L406.5 132.3L406.0 131.7L405.5 131.7L405.0 131.8L404.5 131.8L404.0 131.8L403.5 131.8L403.0 131.8L402.5 131.8L402.0 131.7L401.5 131.8L401.0 131.6L400.5 131.8L400.0 131.6L399.5 131.6L399.0 131.6L398.5 131.8L398.0 131.8L397.5 131.7L397.0 131.7L396.5 131.7L396.0 131.8L395.5 131.8L395.0 132.1L394.5 132.4L394.0 132.9L393.5 133.5L393.0 134.2L392.5 133.0L392.0 131.9L391.5 131.8L391.0 131.7L390.5 131.7L390.0 131.7L389.5 131.8L389.0 131.7L388.5 131.8L388.0 131.8L387.5 131.8L387.0 131.6L386.5 131.7L386.0 131.7L385.5 131.8L385.0 131.6L384.5 131.7L384.0 131.7L383.5 131.7L383.0 131.6L382.5 131.8L382.0 131.8L381.5 131.7L381.0 131.8L380.5 131.7L380.0 131.7L379.5 131.8L379.0 131.8L378.5 131.7L378.0 131.6L377.5 131.7L377.0 131.8L376.5 131.6L376.0 131.7L375.5 131.8L375.0 131.6L374.5 131.7L374.0 131.7L373.5 131.7L373.0 131.8L372.5 131.8L372.0 131.8L371.5 131.8L371.0 132.0L370.5 132.2L370.0 132.5L369.5 133.0L369.0 133.2L368.5 133.9L368.0 134.2L367.5 135.0L367.0 136.1L366.5 137.0L366.0 138.9L365.5 136.1L365.0 133.3L364.5 131.7L364.0 131.6L363.5 131.9L363.0 131.8L362.5 131.8L362.0 131.7L361.5 131.8L361.0 131.7L360.5 131.7L360.0 131.7L359.5 131.7L359.0 131.8L358.5 131.7L358.0 131.7L357.5 131.7L357.0 131.7L356.5 131.8L356.0 131.7L355.5 131.7L355.0 131.6L354.5 131.8L354.0 131.9L353.5 131.6L353.0 131.7L352.5 131.7L352.0 131.7L351.5 131.8L351.0 131.7L350.5 131.8L350.0 131.8L349.5 131.7L349.0 131.7L348.5 131.6L348.0 131.8L347.5 131.7L347.0 131.7L346.5 131.8L346.0 131.8L345.5 131.7L345.0 131.6L344.5 131.9L344.0 131.7L343.5 131.8L343.0 131.7L342.5 132.1L342.0 132.5L341.5 132.8L341.0 133.4L340.5 134.2L340.0 135.1L339.5 135.7L339.0 134.3L338.5 132.3L338.0 131.8L337.5 131.9L337.0 131.8L336.5 131.6L336.0 131.7L335.5 131.8L335.0 131.6L334.5 131.8L334.0 131.8L333.5 131.8L333.0 131.6L332.5 131.6L332.0 131.7L331.5 131.8L331.0 131.8L330.5 131.9L330.0 131.6L329.5 131.7L329.0 131.7L328.5 131.8L328.0 131.8L327.5 131.9L327.0 131.9L326.5 131.6L326.0 131.7L325.5 131.8L325.0 131.8L324.5 131.7L324.0 131.6L323.5 131.7L323.0 131.7L322.5 131.8L322.0 131.7L321.5 131.7L321.0 131.8L320.5 131.8L320.0 131.7L319.5 131.9L319.0 131.9L318.5 131.6L318.0 131.6L317.5 131.8L317.0 131.9L316.5 132.2L316.0 132.5L315.5 133.0L315.0 133.6L314.5 134.3L314.0 135.2L313.5 135.9L313.0 137.3L312.5 138.1L312.0 135.1L311.5 132.7L311.0 131.7L310.5 131.7L310.0 131.8L309.5 131.7L309.0 131.9L308.5 131.8L308.0 131.9L307.5 131.8L307.0 131.8L306.5 131.8L306.0 131.7L305.5 131.8L305.0 131.8L304.5 131.8L304.0 131.8L303.5 131.8L303.0 131.7L302.5 131.7L302.0 131.9L301.5 131.9L301.0 131.9L300.5 131.8L300.0 131.7L299.5 131.6L299.0 131.7L298.5 131.8L298.0 131.8L297.5 131.8L297.0 131.7L296.5 131.7L296.0 131.7L295.5 131.8L295.0 131.7L294.5 131.7L294.0 131.8L293.5 131.8L293.0 131.7L292.5 131.7L292.0 131.8L291.5 131.6L291.0 131.7L290.5 131.7L290.0 131.6L289.5 131.7L289.0 131.7L288.5 131.7L288.0 131.7L287.5 131.9L287.0 132.3L286.5 132.7L286.0 133.1L285.5 132.4L285.0 131.7L284.5 131.6L284.0 131.8L283.5 131.6L283.0 131.9L282.5 131.7L282.0 131.8L281.5 131.8L281.0 131.7L280.5 131.7L280.0 131.8L279.5 131.7L279.0 131.8L278.5 131.8L278.0 131.7L277.5 131.7L277.0 131.8L276.5 131.8L276.0 131.8L275.5 131.6L275.0 131.7L274.5 131.7L274.0 131.8L273.5 131.7L273.0 131.6L272.5 131.6L272.0 131.7L271.5 131.8L271.0 131.9L270.5 131.8L270.0 131.7L269.5 131.8L269.0 131.8L268.5 131.7L268.0 131.6L267.5 131.9L267.0 131.7L266.5 131.7L266.0 131.8L265.5 132.0L265.0 132.2L264.5 132.3L264.0 132.6L263.5 132.8L263.0 133.2L262.5 133.6L262.0 134.3L261.5 134.5L261.0 135.5L260.5 136.5L260.0 137.1L259.5 139.0L259.0 136.1L258.5 133.1L258.0 131.7L257.5 131.6L257.0 131.9L256.5 131.8L256.0 131.7L255.5 131.7L255.0 131.9L254.5 131.8L254.0 131.8L253.5 131.8L253.0 131.8L252.5 131.7L252.0 131.7L251.5 131.8L251.0 131.7L250.5 131.7L250.0 131.7L249.5 131.7L249.0 131.8L248.5 131.7L248.0 131.7L247.5 131.8L247.0 131.7L246.5 131.7L246.0 131.8L245.5 131.8L245.0 131.8L244.5 131.6L244.0 131.6L243.5 131.7L243.0 131.6L242.5 131.8L242.0 131.7L241.5 131.8L241.0 131.7L240.5 131.7L240.0 131.9L239.5 131.6L239.0 131.8L238.5 131.7L238.0 131.8L237.5 131.8L237.0 131.6L236.5 131.7L236.0 131.8L235.5 132.1L235.0 132.5L234.5 132.9L234.0 133.6L233.5 134.1L233.0 134.9L232.5 133.4L232.0 132.0L231.5 131.6L231.0 131.7L230.5 131.8L230.0 131.8L229.5 131.6L229.0 131.7L228.5 131.7L228.0 131.6L227.5 131.7L227.0 131.7L226.5 131.7L226.0 131.9L225.5 131.6L225.0 131.6L224.5 131.6L224.0 131.7L223.5 131.6L223.0 131.8L222.5 131.7L222.0 131.8L221.5 131.7L221.0 131.7L220.5 131.8L220.0 131.7L219.5 131.9L219.0 131.7L218.5 131.7L218.0 131.7L217.5 131.7L217.0 131.8L216.5 131.8L216.0 131.6L215.5 131.9L215.0 131.8L214.5 131.9L214.0 131.9L213.5 131.7L213.0 131.9L212.5 131.7L212.0 131.9L211.5 131.6L211.0 131.8L210.5 131.8L210.0 132.0L209.5 132.4L209.0 132.8L208.5 133.3L208.0 134.0L207.5 134.8L207.0 135.7L206.5 134.0L206.0 132.2L205.5 131.8L205.0 131.7L204.5 131.7L204.0 131.7L203.5 131.8L203.0 131.8L202.5 131.8L202.0 131.8L201.5 131.8L201.0 131.8L200.5 131.8L200.0 131.7L199.5 131.7L199.0 131.8L198.5 131.8L198.0 131.7L197.5 131.6L197.0 131.7L196.5 131.7L196.0 131.6L195.5 131.6L195.0 131.8L194.5 131.7L194.0 132.0L193.5 132.5L193.0 133.1L192.5 132.3L192.0 131.8L191.5 131.8L191.0 131.7L190.5 131.7L190.0 131.9L189.5 131.8L189.0 131.6L188.5 131.8L188.0 131.6L187.5 131.8L187.0 131.7L186.5 131.8L186.0 131.6L185.5 131.8L185.0 131.8L184.5 131.7L184.0 131.8L183.5 131.7L183.0 131.7L182.5 131.7L182.0 131.7L181.5 131.8L181.0 131.8L180.5 131.9L180.0 132.4L179.5 131.8L179.0 131.6L178.5 131.7L178.0 131.7L177.5 131.8L177.0 131.7L176.5 131.8L176.0 131.7L175.5 131.8L175.0 131.6L174.5 131.8L174.0 131.7L173.5 131.8L173.0 131.7L172.5 131.8L172.0 131.7L171.5 131.8L171.0 131.8L170.5 131.8L170.0 131.7L169.5 131.8L169.0 131.7L168.5 131.7L168.0 131.8L167.5 131.7L167.0 131.9L166.5 131.6L166.0 131.8L165.5 131.8L165.0 131.8L164.5 131.8L164.0 131.8L163.5 131.7L163.0 131.7L162.5 131.7L162.0 131.9L161.5 131.8L161.0 131.6L160.5 131.8L160.0 131.7L159.5 131.6L159.0 131.7L158.5 131.6L158.0 131.7L157.5 131.9L157.0 131.8L156.5 132.0L156.0 132.4L155.5 132.8L155.0 133.2L154.5 133.7L154.0 134.1L153.5 135.2L153.0 135.8L152.5 134.3L152.0 132.3L151.5 131.6L151.0 131.8L150.5 131.8L150.0 131.7L149.5 131.7L149.0 131.8L148.5 131.9L148.0 131.7L147.5 131.7L147.0 131.7L146.5 131.8L146.0 131.7L145.5 131.8L145.0 131.8L144.5 131.8L144.0 131.7L143.5 131.8L143.0 131.8L142.5 131.8L142.0 131.8L141.5 131.7L141.0 131.7L140.5 131.7L140.0 131.7L139.5 131.6L139.0 131.9L138.5 131.7L138.0 131.7L137.5 131.6L137.0 131.7L136.5 131.8L136.0 131.7L135.5 131.7L135.0 131.7L134.5 131.9L134.0 131.7L133.5 131.6L133.0 131.7L132.5 131.8L132.0 131.6L131.5 131.7L131.0 131.7L130.5 131.9L130.0 131.9L129.5 132.1L129.0 132.5L128.5 133.0L128.0 133.6L127.5 134.0L127.0 135.0L126.5 133.5L126.0 132.0L125.5 131.7L125.0 131.8L124.5 131.7L124.0 131.9L123.5 131.7L123.0 131.8L122.5 131.8L122.0 131.6L121.5 131.9L121.0 131.7L120.5 131.6L120.0 131.8L119.5 131.8L119.0 131.6L118.5 131.7L118.0 131.6L117.5 131.7L117.0 131.9L116.5 131.7L116.0 131.8L115.5 131.8L115.0 131.7L114.5 131.7L114.0 131.8L113.5 131.7L113.0 131.8L112.5 131.8L112.0 132.0L111.5 132.0L111.0 132.2L110.5 132.1L110.0 132.3L109.5 132.5L109.0 132.6L108.5 132.5L108.0 132.9L107.5 132.9L107.0 133.0L106.5 133.1L106.0 133.5L105.5 133.5L105.0 134.0L104.5 134.1L104.0 134.6L103.5 134.6L103.0 135.3L102.5 135.5L102.0 136.0L101.5 136.7L101.0 137.9L100.5 139.0L100.0 139.9L99.5 136.9L99.0 133.8L98.5 131.6L98.0 131.7L97.5 131.8L97.0 131.7L96.5 131.8L96.0 131.8L95.5 131.7L95.0 131.6L94.5 131.7L94.0 131.9L93.5 131.8L93.0 131.9L92.5 131.8L92.0 131.7L91.5 131.6L91.0 131.7L90.5 131.8L90.0 131.8L89.5 131.7L89.0 131.7L88.5 131.8L88.0 131.7L87.5 131.7L87.0 131.8L86.5 131.7L86.0 131.9L85.5 131.6L85.0 131.7L84.5 131.6L84.0 131.8L83.5 131.7L83.0 131.8L82.5 131.6L82.0 131.7L81.5 131.8L81.0 131.8L80.5 131.6L80.0 131.7L79.5 131.7L79.0 131.7L78.5 131.7L78.0 131.8L77.5 131.7L77.0 131.8L76.5 131.8L76.0 131.8L75.5 131.7L75.0 131.7L74.5 132.0L74.0 132.2L73.5 132.7L73.0 133.3L72.5 132.2L72.0 131.6L71.5 131.7L71.0 131.7L70.5 131.7L70.0 131.7L69.5 131.8L69.0 131.7L68.5 131.8L68.0 131.8L67.5 131.7L67.0 131.8L66.5 131.9L66.0 131.7L65.5 131.8L65.0 131.8L64.5 131.8L64.0 131.7L63.5 131.9L63.0 131.6L62.5 131.6L62.0 131.7L61.5 131.8L61.0 131.8L60.5 131.7L60.0 131.6L59.5 131.8L59.0 131.7L58.5 131.7L58.0 131.8L57.5 131.7L57.0 131.9L56.5 131.7L56.0 131.7L55.5 131.7L55.0 131.6L54.5 131.7L54.0 131.7L53.5 131.7L53.0 131.8L52.5 132.0L52.0 132.2L51.5 132.4L51.0 132.7L50.5 132.7L50.0 133.0L49.5 133.6L49.0 134.1L48.5 134.7L48.0 135.0L47.5 135.9L47.0 136.8L46.5 138.2L46.0 139.5L45.5 136.6L45.0 133.5L44.5 131.7L44.0 131.6L43.5 131.7L43.0 131.6L42.5 131.8L42.0 131.7L41.5 131.8L41.0 131.7L40.5 131.6L40.0 131.8L39.5 131.7L39.0 131.7L38.5 131.7L38.0 131.7L37.5 131.7L37.0 131.7L36.5 131.8L36.0 131.7L35.5 131.7L35.0 131.6L34.5 131.8L34.0 131.9L33.5 131.6L33.0 131.7L32.5 131.7L32.0 131.8L31.5 131.8L31.0 131.8L30.5 131.7L30.0 131.8L29.5 131.7L29.0 131.7L28.5 131.7L28.0 131.7L27.5 131.7L27.0 131.7L26.5 131.8L26.0 131.8L25.5 131.7L25.0 131.8L24.5 131.7L24.0 131.7L23.5 131.7L23.0 131.7L22.5 131.9L22.0 132.2L21.5 132.7L21.0 133.3L20.5 132.3L20.0 131.8L19.5 131.7L19.0 131.7L18.5 131.7L18.0 131.7L17.5 131.8L17.0 131.8L16.5 131.8L16.0 131.8L15.5 131.9L15.0 131.7L14.5 131.6L14.0 131.7L13.5 131.9L13.0 131.8L12.5 131.6L12.0 131.7L11.5 131.8L11.0 131.8L10.5 131.7L10.0 131.8L9.5 131.9L9.0 131.8L8.5 131.9L8.0 131.8L7.5 131.7L7.0 131.8L6.5 131.7L6.0 131.8L5.5 131.9L5.0 131.8L4.5 131.8L4.0 131.7L3.5 131.7L3.0 131.8L2.5 131.7L2.0 131.8L1.5 131.7L1.0 131.6L0.5 131.7L0.0 131.7Z" fill="#fff" stroke="#1c1c1c" stroke-width="1.1" stroke-linejoin="round"/>
<path d="M0.0 175.2L0.5 175.1L1.0 175.2L1.5 175.1L2.0 175.0L2.5 175.2L3.0 175.1L3.5 175.2L4.0 175.2L4.5 175.1L5.0 175.0L5.5 175.0L6.0 175.1L6.5 175.1L7.0 175.1L7.5 175.2L8.0 175.0L8.5 174.9L9.0 175.1L9.5 174.9L10.0 175.1L10.5 175.1L11.0 174.9L11.5 175.0L12.0 175.1L12.5 175.2L13.0 175.1L13.5 175.0L14.0 175.2L14.5 175.3L15.0 175.1L15.5 175.0L16.0 175.0L16.5 175.1L17.0 175.1L17.5 175.1L18.0 175.2L18.5 175.1L19.0 175.1L19.5 175.1L20.0 175.1L20.5 174.4L21.0 173.5L21.5 174.0L22.0 174.5L22.5 174.9L23.0 175.2L23.5 175.2L24.0 175.2L24.5 175.2L25.0 175.1L25.5 175.1L26.0 175.1L26.5 175.0L27.0 175.2L27.5 175.2L28.0 175.2L28.5 175.0L29.0 175.2L29.5 175.2L30.0 175.1L30.5 175.3L31.0 174.9L31.5 174.9L32.0 175.0L32.5 175.1L33.0 175.2L33.5 175.1L34.0 175.0L34.5 174.9L35.0 175.2L35.5 175.1L36.0 175.1L36.5 175.2L37.0 175.1L37.5 175.2L38.0 175.2L38.5 175.0L39.0 175.0L39.5 175.2L40.0 175.1L40.5 175.3L41.0 175.3L41.5 175.1L42.0 175.2L42.5 175.1L43.0 175.2L43.5 175.1L44.0 175.3L44.5 175.0L45.0 170.1L45.5 163.9L46.0 157.3L46.5 160.4L47.0 162.9L47.5 164.2L48.0 166.0L48.5 167.8L49.0 168.3L49.5 169.3L50.0 170.2L50.5 170.7L51.0 171.6L51.5 172.1L52.0 172.2L52.5 172.6L53.0 173.2L53.5 173.3L54.0 173.5L54.5 173.9L55.0 174.2L55.5 174.3L56.0 174.5L56.5 174.7L57.0 174.8L57.5 174.9L58.0 175.1L58.5 175.0L59.0 175.2L59.5 175.1L60.0 175.2L60.5 175.1L61.0 175.0L61.5 175.1L62.0 175.1L62.5 175.2L63.0 175.2L63.5 175.1L64.0 175.1L64.5 175.0L65.0 175.1L65.5 175.1L66.0 175.2L66.5 175.0L67.0 175.1L67.5 175.2L68.0 175.0L68.5 175.0L69.0 175.1L69.5 175.1L70.0 175.1L70.5 175.2L71.0 175.2L71.5 175.1L72.0 175.1L72.5 174.9L73.0 175.0L73.5 175.1L74.0 175.0L74.5 175.0L75.0 175.2L75.5 175.1L76.0 175.1L76.5 175.1L77.0 175.1L77.5 175.2L78.0 175.1L78.5 175.1L79.0 175.2L79.5 175.1L80.0 175.2L80.0 177.7L79.5 177.7L79.0 177.6L78.5 177.6L78.0 177.7L77.5 177.6L77.0 177.8L76.5 177.8L76.0 177.7L75.5 177.7L75.0 177.7L74.5 177.8L74.0 177.7L73.5 177.8L73.0 177.8L72.5 177.7L72.0 177.6L71.5 177.6L71.0 177.7L70.5 177.7L70.0 177.6L69.5 177.7L69.0 177.7L68.5 177.8L68.0 177.7L67.5 177.7L67.0 177.7L66.5 177.8L66.0 177.7L65.5 177.7L65.0 177.7L64.5 177.8L64.0 177.7L63.5 177.8L63.0 177.6L62.5 177.6L62.0 177.7L61.5 177.8L61.0 177.7L60.5 177.7L60.0 177.6L59.5 177.7L59.0 177.7L58.5 177.7L58.0 177.7L57.5 177.9L57.0 178.0L56.5 178.1L56.0 178.2L55.5 178.3L55.0 178.5L54.5 178.8L54.0 178.8L53.5 179.0L53.0 179.5L52.5 179.7L52.0 180.1L51.5 180.6L51.0 181.0L50.5 181.1L50.0 181.6L49.5 182.6L49.0 183.5L48.5 184.5L48.0 185.1L47.5 186.5L47.0 188.1L46.5 190.5L46.0 192.6L45.5 187.5L45.0 181.9L44.5 177.7L44.0 177.6L43.5 177.7L43.0 177.6L42.5 177.7L42.0 177.6L41.5 177.8L41.0 177.7L40.5 177.5L40.0 177.7L39.5 177.6L39.0 177.7L38.5 177.7L38.0 177.7L37.5 177.7L37.0 177.7L36.5 177.7L36.0 177.7L35.5 177.7L35.0 177.5L34.5 177.8L34.0 177.8L33.5 177.6L33.0 177.6L32.5 177.7L32.0 177.8L31.5 177.8L31.0 177.8L30.5 177.7L30.0 177.7L29.5 177.6L29.0 177.6L28.5 177.7L28.0 177.7L27.5 177.7L27.0 177.6L26.5 177.7L26.0 177.7L25.5 177.6L25.0 177.7L24.5 177.6L24.0 177.7L23.5 177.6L23.0 177.7L22.5 177.9L22.0 178.2L21.5 178.7L21.0 179.3L20.5 178.3L20.0 177.7L19.5 177.7L19.0 177.6L18.5 177.6L18.0 177.7L17.5 177.7L17.0 177.8L16.5 177.7L16.0 177.8L15.5 177.8L15.0 177.7L14.5 177.6L14.0 177.7L13.5 177.9L13.0 177.8L12.5 177.5L12.0 177.7L11.5 177.7L11.0 177.7L10.5 177.7L10.0 177.8L9.5 177.8L9.0 177.8L8.5 177.9L8.0 177.7L7.5 177.7L7.0 177.7L6.5 177.6L6.0 177.7L5.5 177.8L5.0 177.7L4.5 177.7L4.0 177.7L3.5 177.6L3.0 177.7L2.5 177.7L2.0 177.8L1.5 177.6L1.0 177.6L0.5 177.7L0.0 177.6Z" fill="#fff" stroke="#1c1c1c" stroke-width="1.1" stroke-linejoin="round"/>
</svg>




<!-- left strip details -->
<svg class="abs" style="left:0;top:200px" width="80" height="360" viewBox="0 200 80 360">
<!-- track2 icons -->
<rect x="1" y="203" width="15" height="17" rx="2" fill="#dadada"/>
<path d="M5 206.5h8.5q1.5 0 1.5 1.5v4.5q0 1.5-1.5 1.5H10l-3 3v-3H5q-1.5 0-1.5-1.5V208q0-1.500 1.500-1.500z" fill="#a4a4a4"/>
<rect x="18" y="205" width="13.500" height="14" fill="#178c9c"/>
<rect x="33" y="203" width="14" height="17" rx="2" fill="#dadada"/>
<rect x="48" y="203" width="14" height="17" rx="2" fill="#dadada"/>
<path d="M50 215.500L54 208.500H57.500L60 212.500" fill="none" stroke="#a0a0a0" stroke-width="1.800"/>
<rect x="49" y="214" width="2.500" height="2.500" fill="#a0a0a0"/><rect x="58.500" y="211" width="2.500" height="2.500" fill="#a0a0a0"/>
<path d="M70 206H67V221H70" fill="none" stroke="#444" stroke-width="1.600"/>
<!-- red item edges -->
<rect x="2" y="224" width="1" height="93" fill="#f4dcdc"/><rect x="18" y="224" width="1" height="93" fill="#f4dcdc"/>
<!-- red waveform -->
<path d="M19 270L19.500 246L20.500 258L22 262L24 260.500L30 260L45 259.800L60 259.700L71 259.500L72 258V284L71 281.500L60 282.500L45 284L30 286L24 287.500L22 288L20.500 290L19.500 282Z" fill="#ffe2e2" stroke="#3a0808" stroke-width=".9"/>
<path d="M3 270L5 262L6 257L7 264L8.500 259L10 266L12 268L14 270L18 270L14 272L12 276L10.500 274L9 281L7.500 284L6 276L4.500 272Z" fill="#ffe6e6" stroke="#4a1010" stroke-width=".6"/>
<path d="M3 258L8 265L3 272Z" fill="#28d428"/><path d="M18 258L11 266L18 273Z" fill="#24dc24"/>
<path d="M19 263L24.500 270L19 277Z" fill="#8c9c9c"/>
<path d="M0 272L2 280L0 282Z" fill="#ff1010"/>
<line x1="0" y1="270" x2="72" y2="270" stroke="#b06060" stroke-width=".6"/>
<!-- track3 controls -->
<circle cx="10" cy="445" r="6.300" fill="#d0d0d0" stroke="#aaa" stroke-width="1.200"/><line x1="10" y1="439" x2="10" y2="445" stroke="#aaa" stroke-width="1.200"/>
<circle cx="29" cy="445" r="6.300" fill="#d0d0d0" stroke="#aaa" stroke-width="1.200"/><line x1="29" y1="439" x2="29" y2="445" stroke="#aaa" stroke-width="1.200"/>
<rect x="39" y="437" width="14" height="17" rx="2" fill="#dadada"/>
<rect x="42" y="444" width="7.500" height="5.500" fill="#a6a6a6"/><path d="M43.500 444v-1.500a2.200 2.200 0 0 1 4.400 0V444" fill="none" stroke="#a6a6a6" stroke-width="1.300"/>
<rect x="54" y="437" width="13" height="17" rx="2" fill="#dadada"/>
<rect x="69" y="437" width="10" height="17" rx="2" fill="#dadada"/>
<!-- blue item -->
<rect x="1" y="456" width="1.200" height="92" fill="#1a5a90"/>
<path d="M20 456H27.500L20 463.500Z" fill="#b4f0ff"/><path d="M20 548V540.500L27.500 548Z" fill="#b4f0ff"/><path d="M0 541L8 548H0Z" fill="#b4f0ff"/>
<path d="M0 500.300L7 500.300V499H19V501L20 500L20.500 482L22 487L23.500 485.500L25 489L27 488L29 490.500L32 491L35 492.500L38 492.300L42 493.500L46 493.200L50 494.500L55 494.300L60 495.500L66 495.800L72 496.500V506L66 507L62 508.200L58 508L54 509.500L50 509.200L46 510.500L42 510.300L38 512L34 512.500L30 514.500L27 516L24 518.500L22 521L20.500 524.500L20 503H19V503.300H7V502H0Z" fill="#f2fbff" stroke="#0c3a5c" stroke-width=".9" stroke-linejoin="round"/>
<line x1="0" y1="501" x2="72" y2="501" stroke="#9ab0c0" stroke-width=".6"/>
</svg>
<div class="abs" style="left:21.500px;top:205px;font-size:14px;line-height:14px;font-weight:bold;color:#fff;font-family:'Liberation Serif',serif">i</div>
<div class="abs" style="left:34px;top:206px;font-size:11.500px;line-height:12px;color:#a4a4a4;letter-spacing:-.6px">FX</div>
<div class="abs" style="left:55.500px;top:438px;font-size:13px;line-height:14px;font-weight:bold;color:#a8a8a8">M</div>
<div class="abs dv" style="left:5px;top:227px;font-size:13.200px;line-height:15px;color:#fff;white-space:nowrap;letter-spacing:.2px">1.</div>
<div class="abs dv" style="left:21px;top:227px;font-size:13.200px;line-height:15px;color:#fff;white-space:nowrap;letter-spacing:.35px">1.00x</div>
<!-- region + marker -->
<div class="abs" style="left:311px;top:13px;width:6px;height:13px;border:1px solid #e4ecff;border-right:none;border-radius:4px 0 0 4px;border-top-color:transparent;border-bottom-color:transparent"></div>
<div class="abs dv" style="left:315px;top:15px;font-size:9.5px;line-height:10px;letter-spacing:.95px;color:#d6e4ff;white-space:nowrap">4 -3 VERSE-</div>
<div class="abs" style="left:312px;top:26px;width:12px;height:12px;background:#f6e62a;border-radius:3px"></div>
<div class="abs dv" style="left:315px;top:27.5px;font-size:9.4px;line-height:10px;font-weight:bold;color:#000">4</div>
<div class="abs dv" style="left:325px;top:27.5px;font-size:9.4px;line-height:10px;letter-spacing:.75px;color:#062400;white-space:nowrap;text-shadow:0 0 .4px #062400">3 Verse</div>
<div class="abs" style="left:312px;top:38px;width:1px;height:46px;background:#f2e422"></div>
<div class="abs" style="left:312px;top:84px;width:1px;height:677px;background:#2f6fe6"></div>
<!-- v scrollbar column -->
<div class="abs" style="left:1102px;top:84px;width:23px;height:701px;background:#393939"></div>
<div class="cb" style="left:1106px;top:86.5px"><svg width="17" height="17" viewBox="0 0 17 17"><path d="M8.5 4.5L12.5 10.5H4.5Z" fill="#8a8a8a"/></svg></div>
<div class="abs" style="left:1107px;top:734px;width:13px;height:3px;background:#5a5a5a;border-radius:1px"></div>
<div class="cb" style="left:1106px;top:741.5px"><svg width="17" height="17" viewBox="0 0 17 17"><rect x="4" y="7.7" width="9" height="1.6" fill="#8a8a8a"/></svg></div>
<!-- h scrollbar -->
<div class="abs" style="left:0;top:761px;width:1102px;height:24px;background:#2b2b2b"></div>
<div class="abs" style="left:351px;top:762px;width:119px;height:21px;background:#525252;border:1px solid #161616;border-radius:2px"></div>
<div class="cb" style="left:1032px;top:764.5px"><svg width="17" height="17" viewBox="0 0 17 17"><path d="M6.5 4.8L12 8.5L6.5 12.2Z" fill="#7c7c7c"/></svg></div>
<div class="cb" style="left:1055px;top:764.5px"><svg width="17" height="17" viewBox="0 0 17 17"><path d="M4 7.7h9v1.6h-9zM7.7 4h1.6v9h-1.6z" fill="#858585"/></svg></div>
<div class="abs" style="left:1075px;top:766px;width:2px;height:11px;background:#5a5a5a"></div>
<div class="cb" style="left:1083px;top:764.5px"><svg width="17" height="17" viewBox="0 0 17 17"><rect x="4" y="7.7" width="9" height="1.6" fill="#858585"/></svg></div>
<!-- transport -->
<div class="abs" style="left:0;top:784px;width:1125px;height:1px;background:#858585"></div>
<div class="abs" style="left:0;top:785px;width:1125px;height:28px;background:linear-gradient(#454545,#3a3a3a 30%,#2f2f2f 85%,#383838)"></div>
<div class="tbox" style="left:-2px;top:789.5px;width:71px"></div>
<div class="tbox" style="left:75px;top:789.5px;width:31px"></div>
<div class="tbox" style="left:112px;top:789.5px;width:69px"></div>
<div class="abs dv tt" style="left:2px;top:792px;width:18.5px;overflow:hidden;font-size:12.6px;letter-spacing:-.4px">BPM</div>
<div class="abs dv tt" style="left:38px;top:791.5px">70</div>
<div class="abs dv tt" style="left:78px;top:791.5px">4/4</div>
<div class="abs dv tt" style="left:115px;top:791.5px">Rate: 1.0</div>
<div class="abs" style="left:183px;top:791px;width:16px;height:16px;border-radius:8px;background:#585858;border:1px solid #222"></div>
<div class="abs" style="left:190px;top:793px;width:1px;height:4px;background:#ddd"></div>
<div class="tbox" style="left:813px;top:789.5px;width:308px;background:#2b2b2b"></div>
<div class="abs" style="left:814px;top:790.5px;width:74px;height:18px;background:#383838"></div>
<div class="abs" style="left:964px;top:790.5px;width:1px;height:18px;background:#3c3c3c"></div>
<div class="abs" style="left:1042px;top:790.5px;width:1px;height:18px;background:#3c3c3c"></div>
<div class="abs dv tt" style="left:816px;top:791.5px">Selection:</div>
<div class="abs dv tt" style="left:902px;top:791.5px;letter-spacing:.2px">1.3.47</div>
<div class="abs dv tt" style="left:975px;top:791.5px;letter-spacing:.2px">57.4.74</div>
<div class="abs dv tt" style="left:1053px;top:791.5px;letter-spacing:.2px">56.1.27</div>
<div class="abs" style="left:0;top:813px;width:1125px;height:1px;background:#5c5c5c"></div>
<div class="abs" style="left:0;top:814px;width:1125px;height:4px;background:linear-gradient(#8e8e8e,#a2a2a2)"></div>
<!-- media explorer -->
<div class="abs" style="left:0;top:818px;width:1125px;height:116px;background:#d8d8d8"></div>
<div class="abs" style="left:-4px;top:825px;width:696px;height:24px;background:#fff;border:1px solid #e6e6e6;border-bottom-color:#c8c8d0;border-radius:2px"></div>
<div class="abs" style="left:0;top:828px;width:668px;height:18px;background:#efefef"></div>
<svg class="abs" style="left:675px;top:833px" width="12" height="8"><path d="M0.5 1h11L6 7Z" fill="#000"/></svg>
<div class="abs" style="left:696px;top:826px;width:346px;height:22px;background:#f1f1f1;border:1px solid #e4e4e4;border-top-color:#c8c8c8"></div>
<div class="btn" style="left:1046px;top:825px;width:76px;height:24px;line-height:22px;text-align:left;padding-left:4px;font-size:13.6px">Details</div>
<svg class="abs" style="left:1104px;top:834px" width="12" height="7"><path d="M0.5 0.5h10L5.5 6.5Z" fill="#000"/></svg>
<div class="abs" style="left:0;top:852px;width:1122px;height:82px;background:#e3e3e3;border-top:2px solid #8c8c8c;border-right:1px solid #bbb"></div>
<div class="abs" style="left:0;top:854px;width:1100px;height:24px;background:linear-gradient(#fff,#fff 45%,#f3f4f6);border-bottom:1px solid #d6d6d6"></div>
<div class="abs" style="left:157px;top:854px;width:1px;height:23px;background:#e2e3ea"></div>
<div class="abs" style="left:228px;top:854px;width:1px;height:23px;background:#e2e3ea"></div>
<div class="abs me" style="left:-1.5px;top:860.5px;font-size:13.9px">Date</div>
<div class="abs me" style="left:165px;top:860.5px;font-size:13.9px">Type</div>
<div class="abs me" style="left:0px;top:883px;letter-spacing:-.35px">12.05.2017 17:25:19</div>
<div class="abs me" style="left:164px;top:883px">&lt;dir&gt;</div>
<div class="abs me" style="left:0px;top:903px;letter-spacing:-.35px">31.03.2017 13:50:18</div>
<div class="abs me" style="left:164px;top:903px">wav</div>
<div class="abs me" style="left:0px;top:923px;letter-spacing:-.35px">30.04.2017 19:17:30</div>
<div class="abs me" style="left:164px;top:923px">wav</div>
<!-- explorer v-scroll -->
<div class="abs" style="left:1100px;top:853px;width:22px;height:81px;background:#f0f0f0"></div>
<svg class="abs" style="left:1103px;top:860px" width="12" height="8"><path d="M6 1L11 6.5H1Z" fill="#333"/></svg>
<div class="abs" style="left:1098px;top:878px;width:21px;height:21px;border:1px solid #979797;border-radius:2px;background:linear-gradient(90deg,#f4f4f4,#e4e4e4 50%,#cfcfcf)"></div>
<div class="abs" style="left:1104px;top:883px;width:9px;height:1px;background:#555;box-shadow:0 3px 0 #555,0 6px 0 #555,0 9px 0 #555"></div>

<!-- right panel -->
<div class="abs" style="left:1125px;top:13px;width:65px;height:921px;background:#323232"></div>
<div class="abs" style="left:1125px;top:13px;width:4px;height:921px;background:#a9a9a9"></div>
<div class="abs" style="left:1129px;top:729px;width:2px;height:205px;background:#555"></div>
<div class="abs" style="left:1131px;top:729px;width:7px;height:205px;background:#b2b2aa"></div>
<div class="abs" style="left:1138px;top:729px;width:52px;height:205px;background:#3b3b3b"></div>
<div class="abs" style="left:1147px;top:729px;width:2px;height:205px;background:#1c1c1c"></div>
<div class="abs" style="left:1149px;top:729px;width:9px;height:205px;background:#424242"></div>
<div class="abs" style="left:1158px;top:729px;width:15px;height:205px;background:#4b4b4b"></div>
<div class="abs" style="left:1173px;top:729px;width:17px;height:205px;background:#3c3c3c"></div>
<div class="abs ml" style="left:1160px;top:746px">6-</div>
<div class="abs ml" style="left:1159px;top:801px">12-</div>
<div class="abs ml" style="left:1159px;top:856px">18-</div>
<div class="abs ml" style="left:1159px;top:911px">24-</div>
<div class="abs ml" style="left:1183px;top:728px">-18</div>
<div class="abs ml" style="left:1183px;top:783px">-24</div>
<div class="abs ml" style="left:1183px;top:838px">-30</div>
<div class="abs ml" style="left:1183px;top:893px">-36</div>


<div class="abs" style="left:1184px;top:142px;width:6px;height:588px;background:#333"></div>
<div class="abs" style="left:1184px;top:540px;width:6px;height:190px;background:#3b3b3b"></div>
<div class="abs" style="left:1185px;top:279px;font-size:12px;line-height:14px;font-style:italic;color:#d8dcec">A</div>
<div class="abs" style="left:1185px;top:293px;width:5px;height:1px;background:#b8b8a8"></div>
<div class="abs" style="left:1185.5px;top:420px;width:9px;height:9px;border:1.6px solid #e8e8e8;border-radius:50%"></div>
<div class="abs" style="left:1185px;top:438px;font-size:13px;line-height:14px;color:#e8e8e8">S</div>
<div class="abs" style="left:1184px;top:456px;width:6px;height:36px;background:#c6c6be"></div>
<div class="abs" style="left:1186px;top:470px;font-size:12px;line-height:12px;color:#333">r</div>
<div class="abs" style="left:1185px;top:495px;width:4px;height:4px;background:#4c8c5c;border:1px solid #7ab88a"></div>
<div class="abs ml" style="left:1183px;top:563px">-0</div>
<div class="abs ml" style="left:1183px;top:618px">-6</div>
<div class="abs ml" style="left:1183px;top:673px">-12</div>
<!-- ===== Actions window ===== -->
<div class="abs" id="win" style="left:72px;top:142px;width:1112px;height:588px"></div>
<div class="abs" id="wtitle" style="left:74px;top:143px;width:1108px;height:28px"></div>
<div class="abs" style="left:73px;top:143px;width:1110px;height:1px;background:rgba(235,240,245,.55)"></div>
<div class="abs" style="left:74px;top:171px;width:1108px;height:1px;background:#c6cbd0"></div>
<div class="abs" style="left:74px;top:143px;width:5px;height:585px;background:linear-gradient(90deg,rgba(255,255,255,.0),rgba(255,255,255,.28) 50%,rgba(255,255,255,0)),linear-gradient(180deg,#c9ced6 0px,#b9bec6 29px,#b0b5bd 56px,#cdd1d7 58px,#cdd1d7 80px,#c25a62 82px,#b8444c 172px,#d0d4da 174px,#d0d4da 176px,#868c94 178px,#868c94 291px,#cdd1d7 293px,#cdd1d7 312px,#7cc4f4 314px,#5aaaea 404px,#c8d0da 406px,#c6ced8 585px)"></div>
<div class="abs" style="left:74px;top:723px;width:1108px;height:5px;background:linear-gradient(90deg,#c5cdd9 0,#c8d0dc 1020px,#7a828e 1027px,#343a44 1031px,#343a44 1049px,#98a0a8 1052px,#a4aaae 1062px,#444a54 1065px,#3c424c 100%)"></div>
<div class="abs" style="left:1179px;top:171px;width:4px;height:557px;background:linear-gradient(180deg,#5a626c 0,#48505a 60px,#454d57 260px,#808892 275px,#858d97 320px,#48505a 335px,#4a525c 100%)"></div>
<div class="abs" style="left:79px;top:172px;width:1100px;height:551px;background:#d4d4d4;border:1px solid #2e2e2e;box-shadow:0 0 0 1px rgba(225,232,240,.85)"></div>
<div class="abs" style="left:80px;top:173px;width:1098px;height:1px;background:#f4f4f4"></div>
<div class="abs" style="left:80px;top:173px;width:1px;height:549px;background:#f4f4f4"></div>
<div class="abs" style="left:81px;top:149px;font-size:16.9px;color:#000;white-space:nowrap;line-height:20px">Actions</div>
<!-- pin + close -->
<svg class="abs" style="left:1136px;top:150px" width="16" height="16" viewBox="0 0 16 16"><path d="M4 1H11.500V3H10V8.200L14 10V11.200H8.400V14.700H7.100V11.200H1.300V10L5.500 8.200V3H4Z" fill="#fff" stroke="#3c4248" stroke-width=".6"/></svg>
<div class="abs" style="left:1156px;top:148px;width:21px;height:21px;background:#5d646c;border:1px solid #aab0b8;box-shadow:0 0 0 1px #3a4048"></div>
<svg class="abs" style="left:1159px;top:151px" width="15" height="15" viewBox="0 0 15 15"><path d="M2.5 2.5L12.5 12.5M12.5 2.5L2.5 12.5" stroke="#fff" stroke-width="3" stroke-linecap="butt"/></svg>

<!-- filter row -->
<div class="abs lbl" style="left:95px;top:193px">Filter:</div>
<div class="abs" style="left:133px;top:187px;width:600px;height:26px;background:#ececec;border:1px solid #f6f6f6;border-top-color:#e0e0e0"></div>
<div class="btn" style="left:739px;top:187px;width:62px">Clear</div>
<div class="btn" style="left:807px;top:187px;width:108px">Find shortcut<span class="d">...</span></div>
<div class="abs lbl" style="left:926px;top:193px">Section:</div>
<div class="abs" style="left:982px;top:186px;width:181px;height:24px;border:1px solid #7c7c7c;border-radius:3px;background:linear-gradient(#f4f4f4,#ececec 48%,#dedede 52%,#d2d2d2);box-shadow:inset 0 0 0 1px rgba(255,255,255,.7)"></div>
<div class="abs lbl" style="left:986px;top:191px">Main</div>
<svg class="abs" style="left:1146px;top:195px" width="12" height="7"><path d="M0.5 0.5h10L5.5 6.5Z" fill="#000"/></svg>

<!-- list -->
<div class="abs" style="left:95px;top:220px;width:1069px;height:359px;background:#e1e1e1;border:1px solid #8f8f8f"></div>
<div class="abs" style="left:96px;top:221px;width:1044px;height:25px;background:linear-gradient(#fff,#fff 45%,#f2f3f5);border-bottom:1px solid #d5d5d5"></div>
<div class="abs" style="left:338px;top:221px;width:673px;height:25px;background:linear-gradient(#f0f9fe,#e6f4fc 45%,#d6ebf8 50%,#d2e8f6);border:1px solid #9ccbe6;border-top:none"></div>
<div class="abs" style="left:1069px;top:221px;width:1px;height:24px;background:#e0e2e8"></div>
<svg class="abs" style="left:668px;top:222px" width="11" height="6"><path d="M0.5 5.5L5.5 0.8L10.5 5.5Z" fill="#b4d4ea" stroke="#5a8eb4" stroke-width=".8"/></svg>
<div class="abs lbl" style="left:103px;top:227px">Shortcut</div>
<div class="abs lbl" style="left:344px;top:227px">Description</div>
<div class="abs lbl" style="left:1017px;top:227px">State</div>
<div class="abs lbl" style="left:1076px;top:227px">Command</div>
<div class="abs" id="lbody" style="left:96px;top:245px;width:1044px;height:310px;overflow:hidden">
<div class="row" style="top:2px"><span style="left:7px"></span><span style="left:248px;letter-spacing:0.083px">Xenakios/SWS: [Deprecated] Load track template 10</span><span style="left:921px"></span><span style="left:980px;letter-spacing:-.25px">_XENAKIOS_LOADTRACKTEMPLATE10</span></div>
<div class="row" style="top:22px"><span style="left:7px"></span><span style="left:248px;letter-spacing:0.094px">Xenakios/SWS: [Deprecated] Project media...</span><span style="left:921px"></span><span style="left:980px;letter-spacing:-.25px">_XENAKIOS_PROJECTMEDIA</span></div>
<div class="row" style="top:42px"><span style="left:7px"></span><span style="left:248px;letter-spacing:0.095px">Xenakios/SWS: [Deprecated] Search takes...</span><span style="left:921px"></span><span style="left:980px;letter-spacing:-.25px">_XENAKIOS_SEARCHTAKES</span></div>
<div class="row" style="top:62px"><span style="left:7px"></span><span style="left:248px;letter-spacing:0.260px">[developer] Debug console</span><span style="left:921px"></span><span style="left:980px;letter-spacing:-.4px">41075</span></div>
<div class="row" style="top:82px"><span style="left:7px"></span><span style="left:248px;letter-spacing:0.000px">[developer] Write C++ API functions header</span><span style="left:921px"></span><span style="left:980px;letter-spacing:-.4px">41064</span></div>
<div class="row" style="top:102px"><span style="left:7px"></span><span style="left:248px;letter-spacing:0.000px">add CLIPPER</span><span style="left:921px"></span><span style="left:980px;letter-spacing:-.25px">_S&amp;M_CYCLACTION_1</span></div>
<div class="row" style="top:122px"><span style="left:7px"></span><span style="left:248px;letter-spacing:0.140px">add DigiLay V2</span><span style="left:921px"></span><span style="left:980px;letter-spacing:-.25px">_S&amp;M_CYCLACTION_2</span></div>
<div class="row" style="top:142px"><span style="left:7px"></span><span style="left:248px;letter-spacing:0.000px">add EXCITER</span><span style="left:921px">off</span><span style="left:980px;letter-spacing:-.25px">_S&amp;M_CYCLACTION_3</span></div>
<div class="row" style="top:162px"><span style="left:7px"></span><span style="left:248px;letter-spacing:0.200px">add HUGEbooty</span><span style="left:921px"></span><span style="left:980px;letter-spacing:-.25px">_S&amp;M_CYCLACTION_4</span></div>
<div class="row" style="top:182px"><span style="left:7px"></span><span style="left:248px;letter-spacing:0.100px">add LOUDERIZER</span><span style="left:921px"></span><span style="left:980px;letter-spacing:-.25px">_S&amp;M_CYCLACTION_5</span></div>
<div class="row" style="top:202px"><span style="left:7px"></span><span style="left:248px;letter-spacing:0.000px">add MOOG</span><span style="left:921px"></span><span style="left:980px;letter-spacing:-.25px">_S&amp;M_CYCLACTION_6</span></div>
<div class="row" style="top:222px"><span style="left:7px"></span><span style="left:248px;letter-spacing:0.300px">add TUBE</span><span style="left:921px"></span><span style="left:980px;letter-spacing:-.25px">_S&amp;M_CYCLACTION_7</span></div>
<div class="row" style="top:242px"><span style="left:7px"></span><span style="left:248px;letter-spacing:0.100px">add reaFIR</span><span style="left:921px"></span><span style="left:980px;letter-spacing:-.25px">_S&amp;M_CYCLACTION_8</span></div>
<div class="row" style="top:262px"><span style="left:7px"></span><span style="left:248px;letter-spacing:0.100px">add xComp</span><span style="left:921px"></span><span style="left:980px;letter-spacing:-.25px">_S&amp;M_CYCLACTION_9</span></div>
<div class="row sel" style="top:282px"><span style="left:7px">/</span><span style="left:248px;letter-spacing:0.270px">dock undock</span><span style="left:921px"></span><span style="left:980px;letter-spacing:-.25px">_S&amp;M_CYCLACTION_10</span></div>
<div class="row" style="top:302px"><span style="left:7px"></span><span style="left:248px;letter-spacing:0.000px">hide show selected track</span><span style="left:921px"></span><span style="left:980px;letter-spacing:-.25px">_S&amp;M_CYCLACTION_11</span></div>
</div>
<!-- v scroll -->
<div class="abs" style="left:1140px;top:221px;width:23px;height:357px;background:#efefef"></div>
<svg class="abs" style="left:1145px;top:230px" width="12" height="8"><path d="M6 1.5L10.5 6.5H1.5Z" fill="#555"/></svg>
<svg class="abs" style="left:1145px;top:538px" width="12" height="8"><path d="M1.5 1.5H10.5L6 6.5Z" fill="#555"/></svg>
<div class="abs" style="left:1141px;top:509px;width:20px;height:21px;border:1px solid #979797;border-radius:2px;background:linear-gradient(90deg,#f6f6f6,#e6e6e6 50%,#d0d0d0)"></div>
<div class="abs" style="left:1146px;top:514px;width:9px;height:1px;background:#555;box-shadow:0 3px 0 #555,0 6px 0 #555,0 9px 0 #555"></div>
<!-- h scroll -->
<div class="abs" style="left:96px;top:555px;width:1044px;height:23px;background:#efefef"></div>
<svg class="abs" style="left:103px;top:560px" width="8" height="12"><path d="M6.5 1V11L1 6Z" fill="#333"/></svg>
<svg class="abs" style="left:1123px;top:560px" width="8" height="12"><path d="M1.5 1V11L7 6Z" fill="#333"/></svg>
<div class="abs" style="left:121px;top:555px;width:892px;height:21px;border:1px solid #989898;border-radius:2px;background:linear-gradient(#f0f0f0,#e2e2e2 48%,#d2d2d2 52%,#cbcbcb)"></div>
<div class="abs" style="left:562px;top:561px;width:1.5px;height:9px;background:#4a4a4a;box-shadow:4.3px 0 0 #4a4a4a,8.4px 0 0 #4a4a4a,1.5px 1px 0 #f8f8f8,5.8px 1px 0 #f8f8f8,9.9px 1px 0 #f8f8f8"></div>

<!-- group box -->
<div class="abs" style="left:95px;top:591px;width:232px;height:81px;border:1px solid #f4f4f4"></div>
<div class="abs" style="left:96px;top:592px;width:230px;height:80px;border:1px solid #a8a8a8;box-shadow:inset 1px 1px 0 #efefef"></div>
<div class="abs lbl" style="left:101px;top:585px;background:#d4d4d4;padding:0 3px">Shortcuts for selected action</div>
<div class="abs" style="left:103px;top:605px;width:140px;height:60px;background:#dedede;border:1px solid #9a9a9a;border-right-color:#f2f2f2;border-bottom-color:#f2f2f2"></div>
<div class="abs lbl" style="left:107px;top:608px">/</div>
<div class="btn" style="left:250px;top:604px;width:70px">Add<span class="d">...</span></div>
<div class="btn dis" style="left:250px;top:638px;width:70px">Delete</div>

<div class="abs lbl" style="left:720px;top:610px">Custom actions:</div>
<div class="btn" style="left:823px;top:602px;width:80px">New<span class="d">...</span></div>
<div class="btn dis" style="left:909px;top:602px;width:80px">Edit<span class="d">...</span></div>
<div class="btn dis" style="left:995px;top:602px;width:80px">Delete</div>
<div class="btn dis" style="left:1081px;top:602px;width:80px">Copy</div>
<div class="abs lbl" style="left:751px;top:644px">ReaScript:</div>
<div class="btn" style="left:823px;top:638px;width:80px">New<span class="d">...</span></div>
<div class="btn" style="left:909px;top:638px;width:80px;border-color:#4e4e4e">Load<span class="d">...</span></div>
<div class="btn dis" style="left:995px;top:638px;width:80px">Edit<span class="d">...</span></div>
<div class="btn dis" style="left:1081px;top:638px;width:80px">Delete</div>

<div class="btn" style="left:96px;top:686px;width:108px">Import/export<span class="d">...</span></div>
<div class="btn" style="left:214px;top:686px;width:108px">Menu editor<span class="d">...</span></div>
<div class="btn" style="left:823px;top:686px;width:108px">Run</div>
<div class="btn" style="left:939px;top:686px;width:108px">Run/close</div>
<div class="btn" style="left:1055px;top:686px;width:108px">Close</div>

</body></html>
